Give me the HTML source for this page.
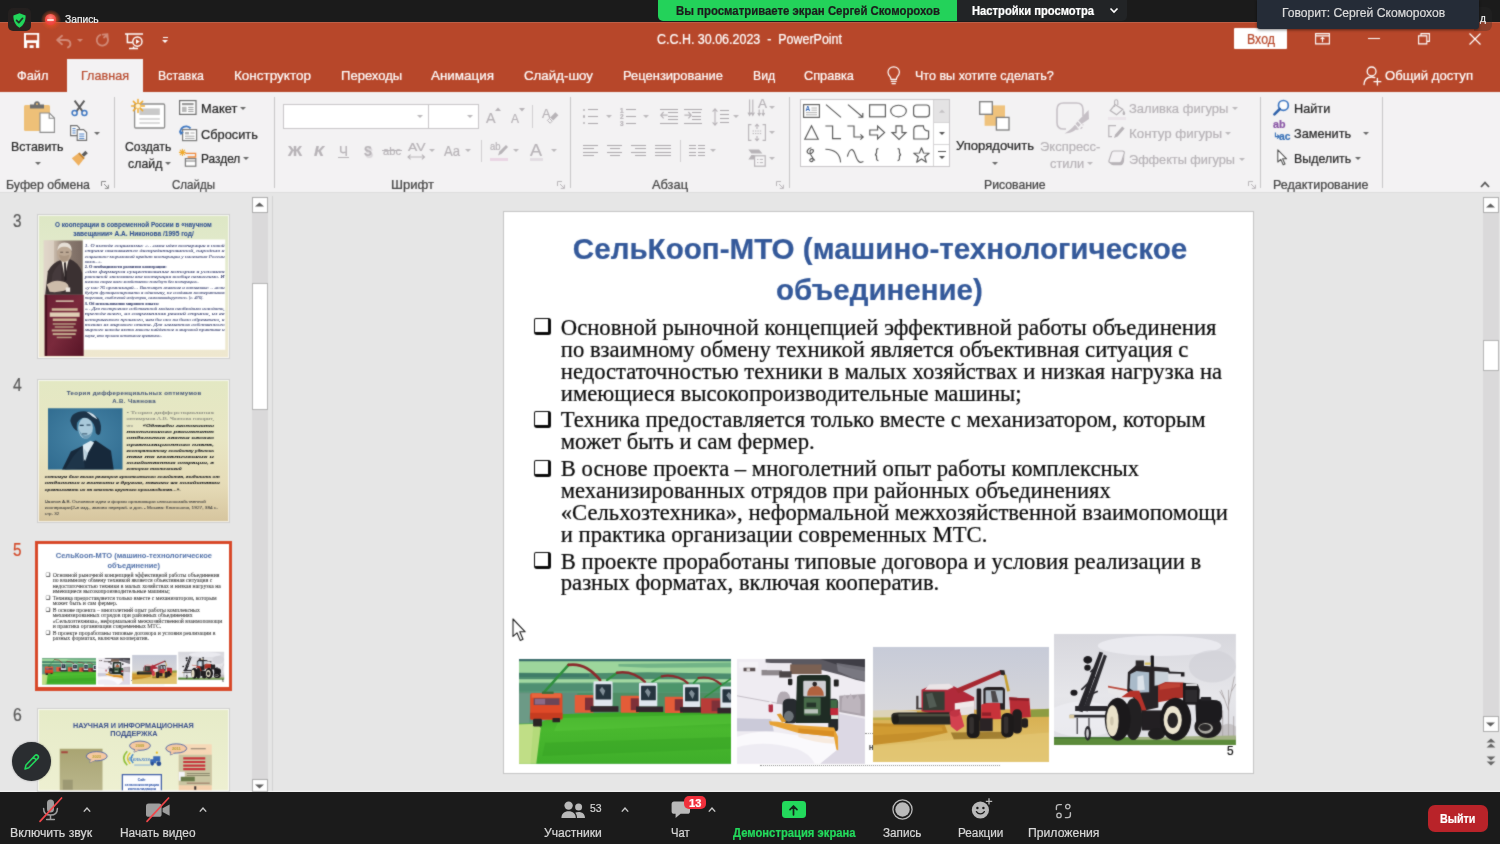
<!DOCTYPE html><html lang="ru"><head><meta charset="utf-8"><title>PowerPoint – Zoom</title><style>
*{box-sizing:border-box;margin:0;padding:0}
html,body{width:1500px;height:844px;overflow:hidden;background:#e6e6e6}
body{position:relative;font-family:"Liberation Sans",sans-serif}
.t{position:absolute;white-space:nowrap;transform-origin:0 50%;display:block;-webkit-text-stroke:.22px currentColor}
#screen{position:absolute;left:0;top:0;width:1500px;height:844px;background:#e6e6e6;filter:url(#soft);will-change:transform}
#zoom{position:absolute;left:0;top:0;width:1500px;height:844px;will-change:transform}
.b{position:absolute}
svg{position:absolute;overflow:visible}
.sep{position:absolute;width:1px;background:#c6c6c6;top:97px;height:91px}
.dd{position:absolute;width:0;height:0;border-left:3px solid transparent;border-right:3px solid transparent;border-top:3.5px solid #6a6a6a}
.dd.dis{border-top-color:#bcb9bc}
</style></head><body><svg width="0" height="0" style="position:absolute" aria-hidden="true"><filter id="soft" x="0" y="0" width="1" height="1" color-interpolation-filters="sRGB"><feConvolveMatrix order="3" kernelMatrix="0.4 1 0.4 1 6.4 1 0.4 1 0.4" divisor="12" edgeMode="duplicate" preserveAlpha="true"/></filter></svg><div id="screen"><div class="b" style="left:0.0px;top:22.0px;width:1500.0px;height:70.0px;background:#b7472a;"></div>
<div class="b" style="left:0.0px;top:92.0px;width:1500.0px;height:101.0px;background:#f3f2f3;"></div>
<div class="b" style="left:0.0px;top:192.0px;width:1500.0px;height:1.0px;background:#dcdcdc;"></div>
<div class="b" style="left:0.0px;top:790.5px;width:1500.0px;height:1.5px;background:#f4f4f4;"></div>
<span class="t" style="left:657.0px;top:39.1px;font:400 14px/0 'Liberation Sans',sans-serif;color:#ffffff;transform:scaleX(0.8904);white-space:pre;">С.С.Н. 30.06.2023  -  PowerPoint</span>
<div class="b" style="left:1234.0px;top:28.0px;width:53.0px;height:21.0px;background:#ffffff;border-radius:1px"></div>
<span class="t" style="left:1247.0px;top:38.7px;font:400 14px/0 'Liberation Sans',sans-serif;color:#b7472a;transform:scaleX(0.8841);">Вход</span>
<div class="b" style="left:66.7px;top:59.3px;width:76.0px;height:32.7px;background:#f3f2f3;"></div>
<span class="t" style="left:16.5px;top:75.6px;font:400 13.5px/0 'Liberation Sans',sans-serif;color:#ffffff;transform:scaleX(0.9487);">Файл</span>
<span class="t" style="left:80.5px;top:75.6px;font:400 13.5px/0 'Liberation Sans',sans-serif;color:#b7472a;transform:scaleX(0.9340);">Главная</span>
<span class="t" style="left:158.0px;top:75.6px;font:400 13.5px/0 'Liberation Sans',sans-serif;color:#ffffff;transform:scaleX(0.9166);">Вставка</span>
<span class="t" style="left:234.0px;top:75.6px;font:400 13.5px/0 'Liberation Sans',sans-serif;color:#ffffff;">Конструктор</span>
<span class="t" style="left:340.8px;top:75.6px;font:400 13.5px/0 'Liberation Sans',sans-serif;color:#ffffff;transform:scaleX(0.9664);">Переходы</span>
<span class="t" style="left:431.0px;top:75.6px;font:400 13.5px/0 'Liberation Sans',sans-serif;color:#ffffff;transform:scaleX(0.9941);">Анимация</span>
<span class="t" style="left:524.0px;top:75.6px;font:400 13.5px/0 'Liberation Sans',sans-serif;color:#ffffff;transform:scaleX(0.9857);">Слайд-шоу</span>
<span class="t" style="left:622.6px;top:75.6px;font:400 13.5px/0 'Liberation Sans',sans-serif;color:#ffffff;transform:scaleX(0.9592);">Рецензирование</span>
<span class="t" style="left:752.5px;top:75.6px;font:400 13.5px/0 'Liberation Sans',sans-serif;color:#ffffff;transform:scaleX(0.9084);">Вид</span>
<span class="t" style="left:804.0px;top:75.6px;font:400 13.5px/0 'Liberation Sans',sans-serif;color:#ffffff;transform:scaleX(0.9421);">Справка</span>
<span class="t" style="left:915.2px;top:75.6px;font:400 13.5px/0 'Liberation Sans',sans-serif;color:#ffffff;transform:scaleX(0.9300);">Что вы хотите сделать?</span>
<span class="t" style="left:1385.0px;top:75.6px;font:400 13.5px/0 'Liberation Sans',sans-serif;color:#ffffff;transform:scaleX(0.9702);">Общий доступ</span>
<div class="sep" style="left:113.5px"></div>
<div class="sep" style="left:274.0px"></div>
<div class="sep" style="left:569.5px"></div>
<div class="sep" style="left:788.8px"></div>
<div class="sep" style="left:1260.0px"></div>
<div class="sep" style="left:1382.0px"></div>
<span class="t" style="left:5.6px;top:185.2px;font:400 12.2px/0 'Liberation Sans',sans-serif;color:#444444;transform:scaleX(1.0143);">Буфер обмена</span>
<span class="t" style="left:171.7px;top:185.2px;font:400 12.2px/0 'Liberation Sans',sans-serif;color:#444444;transform:scaleX(0.9477);">Слайды</span>
<span class="t" style="left:391.0px;top:185.2px;font:400 12.2px/0 'Liberation Sans',sans-serif;color:#444444;transform:scaleX(1.0721);">Шрифт</span>
<span class="t" style="left:652.0px;top:185.2px;font:400 12.2px/0 'Liberation Sans',sans-serif;color:#444444;transform:scaleX(1.0525);">Абзац</span>
<span class="t" style="left:984.3px;top:185.2px;font:400 12.2px/0 'Liberation Sans',sans-serif;color:#444444;transform:scaleX(1.0050);">Рисование</span>
<span class="t" style="left:1273.0px;top:185.2px;font:400 12.2px/0 'Liberation Sans',sans-serif;color:#444444;transform:scaleX(1.0286);">Редактирование</span>
<span class="t" style="left:11.0px;top:146.9px;font:400 13.3px/0 'Liberation Sans',sans-serif;color:#262626;transform:scaleX(0.9313);">Вставить</span>
<i class="dd" style="left:35.0px;top:161.5px;"></i>
<i class="dd" style="left:94.0px;top:131.5px;"></i>
<span class="t" style="left:125.4px;top:146.9px;font:400 13.3px/0 'Liberation Sans',sans-serif;color:#262626;transform:scaleX(0.9160);">Создать</span>
<span class="t" style="left:128.0px;top:163.5px;font:400 13.3px/0 'Liberation Sans',sans-serif;color:#262626;transform:scaleX(0.9297);">слайд</span>
<i class="dd" style="left:165.0px;top:161.5px;"></i>
<span class="t" style="left:200.7px;top:109.0px;font:400 13.3px/0 'Liberation Sans',sans-serif;color:#262626;transform:scaleX(0.9644);">Макет</span>
<i class="dd" style="left:240.0px;top:107.0px;"></i>
<span class="t" style="left:200.7px;top:134.7px;font:400 13.3px/0 'Liberation Sans',sans-serif;color:#262626;transform:scaleX(0.9626);">Сбросить</span>
<span class="t" style="left:200.7px;top:159.0px;font:400 13.3px/0 'Liberation Sans',sans-serif;color:#262626;transform:scaleX(0.8941);">Раздел</span>
<i class="dd" style="left:243.0px;top:157.0px;"></i>
<div class="b" style="left:283.0px;top:104.0px;width:145.5px;height:25.0px;background:#ffffff;border:1px solid #c8c6c8"></div>
<div class="b" style="left:428.0px;top:104.0px;width:51.0px;height:25.0px;background:#ffffff;border:1px solid #c8c6c8"></div>
<i class="dd dis" style="left:417.0px;top:115.0px;"></i>
<i class="dd dis" style="left:467.0px;top:115.0px;"></i>
<span class="t" style="left:288.0px;top:150.8px;font:700 14.5px/0 'Liberation Sans',sans-serif;color:#b7b3b7;transform:scaleX(1.0679);">Ж</span>
<span class="t" style="left:314.0px;top:150.8px;font:700 14.5px/0 'Liberation Sans',sans-serif;font-style:italic;color:#b7b3b7;transform:scaleX(1.1208);">К</span>
<span class="t" style="left:338.5px;top:150.8px;font:400 14.5px/0 'Liberation Sans',sans-serif;color:#b7b3b7;transform:scaleX(0.9305);border-bottom:0;">Ч</span>
<div class="b" style="left:337.5px;top:157.2px;width:11.0px;height:1.2px;background:#b7b3b7;"></div>
<span class="t" style="left:364.0px;top:150.8px;font:700 14.5px/0 'Liberation Sans',sans-serif;color:#b7b3b7;transform:scaleX(0.8271);text-shadow:1.5px 1.5px 1px #d6d3d6;">S</span>
<span class="t" style="left:383.0px;top:151.3px;font:400 11.5px/0 'Liberation Sans',sans-serif;color:#b7b3b7;transform:scaleX(0.9705);">abc</span>
<div class="b" style="left:382.0px;top:150.2px;width:20.0px;height:1.0px;background:#b7b3b7;"></div>
<span class="t" style="left:407.5px;top:146.8px;font:400 11.5px/0 'Liberation Sans',sans-serif;color:#b7b3b7;transform:scaleX(1.2069);">AV</span>
<i class="dd dis" style="left:429.0px;top:148.5px;"></i>
<span class="t" style="left:444.0px;top:150.8px;font:400 14.5px/0 'Liberation Sans',sans-serif;color:#b7b3b7;transform:scaleX(0.9014);">Aa</span>
<i class="dd dis" style="left:465.0px;top:148.5px;"></i>
<div class="b" style="left:481.0px;top:140.0px;width:1.0px;height:22.0px;background:#d0ced0;"></div>
<i class="dd dis" style="left:513.0px;top:148.5px;"></i>
<span class="t" style="left:530.0px;top:150.9px;font:400 17px/0 'Liberation Sans',sans-serif;color:#b7b3b7;transform:scaleX(1.0579);">A</span>
<i class="dd dis" style="left:551.0px;top:148.5px;"></i>
<span class="t" style="left:485.5px;top:118.3px;font:400 14.5px/0 'Liberation Sans',sans-serif;color:#b7b3b7;transform:scaleX(0.9822);">A</span>
<span class="t" style="left:510.5px;top:119.0px;font:400 12.5px/0 'Liberation Sans',sans-serif;color:#b7b3b7;transform:scaleX(0.9588);">A</span>
<div class="b" style="left:532.0px;top:105.0px;width:1.0px;height:23.0px;background:#d0ced0;"></div>
<i class="dd dis" style="left:606.0px;top:115.0px;"></i>
<i class="dd dis" style="left:643.0px;top:115.0px;"></i>
<i class="dd dis" style="left:733.0px;top:115.0px;"></i>
<i class="dd dis" style="left:769.0px;top:106.0px;"></i>
<i class="dd dis" style="left:769.0px;top:131.0px;"></i>
<i class="dd dis" style="left:769.0px;top:156.5px;"></i>
<i class="dd dis" style="left:710.0px;top:149.0px;"></i>
<div class="b" style="left:680.0px;top:140.0px;width:1.0px;height:22.0px;background:#d0ced0;"></div>
<div class="b" style="left:799.5px;top:99.0px;width:150.5px;height:67.5px;background:#ffffff;border:1px solid #c8c6c8"></div>
<div class="b" style="left:933.5px;top:100.0px;width:15.5px;height:22.0px;background:#e4e3e4;"></div>
<div class="b" style="left:933.0px;top:100.0px;width:1.0px;height:65.5px;background:#d6d4d6;"></div>
<div class="b" style="left:934.0px;top:122.0px;width:15.0px;height:1.0px;background:#d6d4d6;"></div>
<div class="b" style="left:934.0px;top:144.0px;width:15.0px;height:1.0px;background:#d6d4d6;"></div>
<svg style="left:938.5px;top:109px" width="6" height="4" viewBox="0 0 6 4"><path d="M0 3.8 L3 0.4 L6 3.8Z" fill="#c4c2c4"/></svg>
<i class="dd" style="left:938.5px;top:132.0px;border-top-color:#555;"></i>
<i class="dd" style="left:938.5px;top:156.0px;border-top-color:#555;"></i>
<div class="b" style="left:937.5px;top:151.0px;width:8.0px;height:1.3px;background:#555;"></div>
<span class="t" style="left:955.7px;top:146.0px;font:400 13.3px/0 'Liberation Sans',sans-serif;color:#262626;transform:scaleX(0.9856);">Упорядочить</span>
<i class="dd" style="left:992.0px;top:161.5px;"></i>
<span class="t" style="left:1040.0px;top:146.7px;font:400 13.3px/0 'Liberation Sans',sans-serif;color:#b7b3b7;transform:scaleX(0.9759);">Экспресс-</span>
<span class="t" style="left:1049.5px;top:163.6px;font:400 13.3px/0 'Liberation Sans',sans-serif;color:#b7b3b7;transform:scaleX(0.9644);">стили</span>
<i class="dd dis" style="left:1087.0px;top:161.5px;"></i>
<span class="t" style="left:1129.0px;top:108.6px;font:400 13.3px/0 'Liberation Sans',sans-serif;color:#b7b3b7;transform:scaleX(0.9789);">Заливка фигуры</span>
<i class="dd dis" style="left:1232.0px;top:106.5px;"></i>
<span class="t" style="left:1129.0px;top:133.9px;font:400 13.3px/0 'Liberation Sans',sans-serif;color:#b7b3b7;">Контур фигуры</span>
<i class="dd dis" style="left:1225.0px;top:132.0px;"></i>
<span class="t" style="left:1129.0px;top:159.6px;font:400 13.3px/0 'Liberation Sans',sans-serif;color:#b7b3b7;transform:scaleX(0.9566);">Эффекты фигуры</span>
<i class="dd dis" style="left:1239.0px;top:157.5px;"></i>
<span class="t" style="left:1294.2px;top:108.7px;font:400 13.3px/0 'Liberation Sans',sans-serif;color:#262626;transform:scaleX(0.9564);">Найти</span>
<span class="t" style="left:1294.2px;top:134.4px;font:400 13.3px/0 'Liberation Sans',sans-serif;color:#262626;transform:scaleX(0.9571);">Заменить</span>
<i class="dd" style="left:1362.7px;top:132.0px;"></i>
<span class="t" style="left:1294.2px;top:158.9px;font:400 13.3px/0 'Liberation Sans',sans-serif;color:#262626;transform:scaleX(0.9325);">Выделить</span>
<i class="dd" style="left:1355.0px;top:157.0px;"></i>
<svg style="left:24.3px;top:33.2px" width="15.2" height="15" viewBox="0 0 15.2 15"><path d="M0 0 H15.2 V15 H0 Z M2 1.8 V7.2 H13.2 V1.8 Z M3.2 10 V15 H5.6 V12.2 H9.6 V15 H12 V10 Z" fill="#fff" fill-rule="evenodd"/></svg>
<svg style="left:55.5px;top:34.5px" width="16" height="13" viewBox="0 0 16 13"><path d="M6 0.8 L1.2 5 L6 9.2 M1.6 5 H9.5 C12.6 5 14.4 6.8 14.4 9 C14.4 10.8 13.4 11.8 12 12.4" fill="none" stroke="rgba(255,255,255,.36)" stroke-width="1.9" stroke-linejoin="round" stroke-linecap="round"/></svg>
<i class="dd" style="left:76.5px;top:38.8px;border-top-color:rgba(255,255,255,.36);"></i>
<svg style="left:95.0px;top:33.4px" width="14" height="14" viewBox="0 0 14 14"><path d="M7.6 1.6 L12.4 1.2 L12.8 6 M12.2 1.8 C12.2 1.8 9 4.5 9 4.5 M11.6 3.4 C13 5 13.4 7.6 12.2 9.8 C10.6 12.6 7 13.4 4.4 11.8 C1.8 10.2 1 6.8 2.6 4.2 C3.2 3.2 4.2 2.4 5.2 2" fill="none" stroke="rgba(255,255,255,.36)" stroke-width="1.8" stroke-linecap="round"/></svg>
<svg style="left:125.0px;top:33.0px" width="18.5" height="17" viewBox="0 0 18.5 17"><path d="M0 1 H18 M2.4 1 V9.6 H7.6 M4 15.6 H13 M8.6 15.6 L8.6 13.4" fill="none" stroke="#fff" stroke-width="1.5"/><circle cx="12.4" cy="8.6" r="4.6" fill="none" stroke="#fff" stroke-width="1.4"/><path d="M11 6.2 L14.8 8.6 L11 11 Z" fill="#fff"/></svg>
<div class="b" style="left:162.6px;top:37.0px;width:5.4px;height:1.3px;background:#fff;"></div>
<i class="dd" style="left:162.3px;top:40.3px;border-top-color:#fff"></i>
<svg style="left:1314.5px;top:32.5px" width="15" height="11.5" viewBox="0 0 15 11.5"><path d="M0.6 0.6 H14.4 V10.9 H0.6 Z M0.6 2.9 H14.4" fill="none" stroke="#fff" stroke-width="1.1"/><path d="M7.5 9.2 V4.6 M5.6 6.2 L7.5 4.4 L9.4 6.2" fill="none" stroke="#fff" stroke-width="1.1"/></svg>
<div class="b" style="left:1367.5px;top:38.2px;width:12.0px;height:1.2px;background:#fff;"></div>
<svg style="left:1418.0px;top:32.5px" width="12" height="11.5" viewBox="0 0 12 11.5"><path d="M0.6 2.9 H8.8 V10.9 H0.6 Z M3 2.9 V0.6 H11.4 V8.4 H8.8" fill="none" stroke="#fff" stroke-width="1.1"/></svg>
<svg style="left:1468.5px;top:32.5px" width="12" height="12" viewBox="0 0 12 12"><path d="M0.5 0.5 L11.5 11.5 M11.5 0.5 L0.5 11.5" stroke="#fff" stroke-width="1.2" fill="none"/></svg>
<svg style="left:886.5px;top:66.0px" width="13.5" height="19" viewBox="0 0 13.5 19"><path d="M6.7 0.8 C3.4 0.8 1 3.2 1 6.2 C1 8.2 2 9.4 3 10.6 C3.7 11.5 4 12.2 4 13.4 H9.4 C9.4 12.2 9.7 11.5 10.4 10.6 C11.4 9.4 12.4 8.2 12.4 6.2 C12.4 3.2 10 0.8 6.7 0.8 Z M4.3 15.4 H9.1 M5 17.6 H8.4" fill="none" stroke="#fff" stroke-width="1.2" stroke-linecap="round"/></svg>
<svg style="left:1363.0px;top:65.5px" width="19" height="20" viewBox="0 0 19 20"><circle cx="8.6" cy="5.4" r="4.4" fill="none" stroke="#fff" stroke-width="1.3"/><path d="M1 18.6 C1.4 13.6 4.6 11 8.6 11 C9.8 11 10.8 11.2 11.8 11.6 M14.4 12.4 V19 M11 15.7 H17.8" fill="none" stroke="#fff" stroke-width="1.3" stroke-linecap="round"/></svg>
<svg style="left:24.0px;top:101.0px" width="31" height="32" viewBox="0 0 31 32"><rect x="0" y="4" width="26" height="26" rx="1.5" fill="#eec078"/><path d="M6 7.5 V3.6 H10 C10 1.4 11.2 0.2 13 0.2 C14.8 0.2 16 1.4 16 3.6 H20 V7.5 Z" fill="#6e6e6e"/><circle cx="13" cy="3" r="1" fill="#eec078"/><path d="M16 12 H25.4 L30.4 17 V31.4 H16 Z" fill="#fff" stroke="#8a8a8a" stroke-width="1.1"/><path d="M25.2 12.2 V17.2 H30.2" fill="none" stroke="#8a8a8a" stroke-width="1.1"/></svg>
<svg style="left:70.5px;top:99.5px" width="17" height="16" viewBox="0 0 17 16"><path d="M3.6 0.6 L11.6 11.4 M13.4 0.6 L5.4 11.4" stroke="#5c5c5c" stroke-width="1.9" fill="none"/><circle cx="3.6" cy="13" r="2.5" fill="none" stroke="#3f78c2" stroke-width="1.5"/><circle cx="13.4" cy="13" r="2.5" fill="none" stroke="#3f78c2" stroke-width="1.5"/></svg>
<svg style="left:70.0px;top:124.5px" width="18" height="16" viewBox="0 0 18 16"><path d="M0.6 0.6 H7 L9.4 3 V10.6 H0.6 Z" fill="#fff" stroke="#6e6e6e" stroke-width="1.1"/><path d="M2.4 3.6 H5.6 M2.4 5.8 H5.6 M2.4 8 H5.6" stroke="#4a7fc4" stroke-width="1"/><path d="M7.2 4.6 H13.6 L16.6 7.6 V15.4 H7.2 Z" fill="#fff" stroke="#6e6e6e" stroke-width="1.1"/><path d="M9.2 9 H14.4 M9.2 11.2 H14.4 M9.2 13.4 H14.4" stroke="#4a7fc4" stroke-width="1"/></svg>
<svg style="left:70.5px;top:149.5px" width="18" height="17" viewBox="0 0 18 17"><path d="M0.8 8.2 L6.8 3.8 L12.4 9.6 L7.6 15.8 Z" fill="#eeb160"/><path d="M6.8 3.8 L8.6 2.4 L13.8 8 L12.4 9.6 Z" fill="#c9862e"/><path d="M10.6 4.4 L14.4 0.8 L16.8 3.2 L13 6.8 Z" fill="#5c5c5c"/></svg>
<svg style="left:131.0px;top:98.5px" width="35" height="30" viewBox="0 0 35 30"><rect x="3.6" y="5" width="30" height="24" rx="1.2" fill="#fff" stroke="#8c8c8c" stroke-width="1.3"/><rect x="8.4" y="9.4" width="20.4" height="6.6" fill="#c9c9c9"/><path d="M8.4 20 H28.8 M8.4 24 H28.8" stroke="#b5b5b5" stroke-width="1.2"/><g stroke="#efa92c" stroke-width="1.5" stroke-linecap="round"><path d="M7 0.6 V13.4 M0.6 7 H13.4 M2.4 2.4 L11.6 11.6 M11.6 2.4 L2.4 11.6"/></g><circle cx="7" cy="7" r="2.3" fill="#fff3d0"/></svg>
<svg style="left:179.0px;top:100.0px" width="17.6" height="15" viewBox="0 0 17.6 15"><rect x="0.6" y="0.6" width="16.4" height="13.8" fill="#fff" stroke="#6e6e6e" stroke-width="1.2"/><rect x="3" y="3" width="11.6" height="2.2" fill="#9a9a9a"/><rect x="3" y="6.8" width="4.6" height="5.2" fill="#b9b9b9"/><path d="M9.2 7.4 H14.6 M9.2 9.4 H14.6 M9.2 11.4 H14.6" stroke="#9a9a9a" stroke-width="1"/></svg>
<svg style="left:178.5px;top:124.5px" width="18.5" height="16.5" viewBox="0 0 18.5 16.5"><rect x="3.6" y="4.6" width="14" height="11" fill="#fff" stroke="#7a7a7a" stroke-width="1.2"/><rect x="6" y="7" width="4" height="2.4" fill="#b0b0b0"/><path d="M11.4 8 H15.6 M6 11.2 H15.6 M6 13.4 H15.6" stroke="#a6a6a6" stroke-width="1"/><path d="M1.6 8.6 C0.4 4.4 3.4 1.2 7.6 1.4 C9.4 1.5 10.6 2.2 11.6 3.4" fill="none" stroke="#3f78c2" stroke-width="1.7"/><path d="M0 6.2 L1.8 10.2 L4.8 7 Z" fill="#3f78c2"/></svg>
<svg style="left:179.0px;top:149.0px" width="18" height="18" viewBox="0 0 18 18"><g stroke="#efa92c" stroke-width="1.1" stroke-linecap="round"><path d="M3.4 0.4 V6.4 M0.4 3.4 H6.4 M1.2 1.2 L5.6 5.6 M5.6 1.2 L1.2 5.6"/></g><path d="M6.4 4.4 H16.6 V8 H8.6" fill="none" stroke="#ef8a3c" stroke-width="1.3"/><rect x="6.4" y="9.6" width="10.4" height="7.6" fill="#fff" stroke="#7a7a7a" stroke-width="1.2"/><path d="M6.4 12 H16.8" stroke="#7a7a7a" stroke-width="1"/></svg>
<svg style="left:494.5px;top:106.5px" width="6" height="4" viewBox="0 0 6 4"><path d="M0 4 L3 0.4 L6 4 Z" fill="#b7b3b7"/></svg>
<svg style="left:518.5px;top:107.5px" width="6" height="4" viewBox="0 0 6 4"><path d="M0 0 L3 3.6 L6 0 Z" fill="#b7b3b7"/></svg>
<span class="t" style="left:541.5px;top:114.2px;font:400 12.5px/0 'Liberation Sans',sans-serif;color:#b7b3b7;transform:scaleX(1.0187);">A</span>
<svg style="left:545.0px;top:111.0px" width="14" height="14" viewBox="0 0 14 14"><path d="M5.2 6.4 L10.4 1.2 L13.4 4.2 L8.2 9.4 Z" fill="#b7b3b7"/><path d="M4.4 7.4 L7.2 10.2 L5.2 12.2 L2.4 9.4 Z" fill="none" stroke="#b7b3b7" stroke-width="1"/></svg>
<svg style="left:407.0px;top:154.0px" width="18.5" height="6" viewBox="0 0 18.5 6"><path d="M1 3 H17.5 M3.6 0.6 L1 3 L3.6 5.4 M14.9 0.6 L17.5 3 L14.9 5.4" fill="none" stroke="#b7b3b7" stroke-width="1.1"/></svg>
<span class="t" style="left:490.0px;top:146.4px;font:400 10.5px/0 'Liberation Sans',sans-serif;color:#b7b3b7;transform:scaleX(0.8984);">ab</span>
<svg style="left:495.0px;top:143.5px" width="14" height="14" viewBox="0 0 14 14"><path d="M3 11.4 L4.4 7.6 L11 1 L13 3 L6.6 9.8 Z" fill="#b7b3b7"/></svg>
<div class="b" style="left:490.0px;top:158.0px;width:18.0px;height:2.6px;background:#ead6e4;"></div>
<div class="b" style="left:529.5px;top:158.0px;width:13.0px;height:2.6px;background:#e2dde2;"></div>
<div class="b" style="left:583.0px;top:108.8px;width:2.4px;height:2.4px;background:#b7b3b7;border-radius:50%"></div>
<div class="b" style="left:583.0px;top:115.4px;width:2.4px;height:2.4px;background:#b7b3b7;border-radius:50%"></div>
<div class="b" style="left:583.0px;top:122.0px;width:2.4px;height:2.4px;background:#b7b3b7;border-radius:50%"></div>
<div class="b" style="left:588.0px;top:109.0px;width:10.0px;height:1.0px;background:#aca8ac;"></div><div class="b" style="left:588.0px;top:116.0px;width:10.0px;height:1.0px;background:#aca8ac;"></div><div class="b" style="left:588.0px;top:123.0px;width:10.0px;height:1.0px;background:#aca8ac;"></div>
<span class="t" style="left:620.0px;top:110.7px;font:700 6.5px/0 'Liberation Sans',sans-serif;color:#b7b3b7;transform:scaleX(0.9931);">1</span>
<span class="t" style="left:620.0px;top:117.3px;font:700 6.5px/0 'Liberation Sans',sans-serif;color:#b7b3b7;transform:scaleX(0.9931);">2</span>
<span class="t" style="left:620.0px;top:123.9px;font:700 6.5px/0 'Liberation Sans',sans-serif;color:#b7b3b7;transform:scaleX(0.9931);">3</span>
<div class="b" style="left:626.0px;top:109.0px;width:10.0px;height:1.0px;background:#aca8ac;"></div><div class="b" style="left:626.0px;top:116.0px;width:10.0px;height:1.0px;background:#aca8ac;"></div><div class="b" style="left:626.0px;top:123.0px;width:10.0px;height:1.0px;background:#aca8ac;"></div>
<div class="b" style="left:660.0px;top:109.0px;width:18.0px;height:1.0px;background:#aca8ac;"></div><div class="b" style="left:660.0px;top:123.0px;width:18.0px;height:1.0px;background:#aca8ac;"></div>
<div class="b" style="left:668.0px;top:112.0px;width:10.0px;height:1.0px;background:#aca8ac;"></div><div class="b" style="left:668.0px;top:116.0px;width:10.0px;height:1.0px;background:#aca8ac;"></div><div class="b" style="left:668.0px;top:119.0px;width:10.0px;height:1.0px;background:#aca8ac;"></div>
<svg style="left:660.0px;top:111.4px" width="8" height="8.4" viewBox="0 0 8 8.4"><path d="M7.6 4.2 H1 M3.6 1 L0.8 4.2 L3.6 7.4" fill="none" stroke="#b7b3b7" stroke-width="1.2"/></svg>
<div class="b" style="left:684.0px;top:109.0px;width:18.0px;height:1.0px;background:#aca8ac;"></div><div class="b" style="left:684.0px;top:123.0px;width:18.0px;height:1.0px;background:#aca8ac;"></div>
<div class="b" style="left:692.0px;top:112.0px;width:9.0px;height:1.0px;background:#aca8ac;"></div><div class="b" style="left:692.0px;top:116.0px;width:9.0px;height:1.0px;background:#aca8ac;"></div><div class="b" style="left:692.0px;top:119.0px;width:9.0px;height:1.0px;background:#aca8ac;"></div>
<svg style="left:684.0px;top:111.4px" width="8" height="8.4" viewBox="0 0 8 8.4"><path d="M0.4 4.2 H7 M4.4 1 L7.2 4.2 L4.4 7.4" fill="none" stroke="#b7b3b7" stroke-width="1.2"/></svg>
<svg style="left:712.0px;top:107.5px" width="6" height="18" viewBox="0 0 6 18"><path d="M3 1 V17 M0.6 3.6 L3 0.8 L5.4 3.6 M0.6 14.4 L3 17.2 L5.4 14.4" fill="none" stroke="#b7b3b7" stroke-width="1.1"/></svg>
<div class="b" style="left:720.0px;top:110.0px;width:9.0px;height:1.0px;background:#aca8ac;"></div><div class="b" style="left:720.0px;top:114.0px;width:9.0px;height:1.0px;background:#aca8ac;"></div><div class="b" style="left:720.0px;top:118.0px;width:9.0px;height:1.0px;background:#aca8ac;"></div><div class="b" style="left:720.0px;top:122.0px;width:9.0px;height:1.0px;background:#aca8ac;"></div>
<svg style="left:748.0px;top:98.5px" width="18" height="18" viewBox="0 0 18 18"><path d="M1.6 0.6 V16 M4.8 0.6 V16 M0 13.6 L1.6 16.4 L3.2 13.6 M3.2 13.6 L4.8 16.4 L6.4 13.6 M11.2 10.4 V16 M15.2 10.4 V16 M9.8 14 L11.2 16.4 L12.6 14 M13.8 14 L15.2 16.4 L16.6 14" fill="none" stroke="#b7b3b7" stroke-width="1.1"/></svg>
<span class="t" style="left:757.5px;top:104.3px;font:400 12px/0 'Liberation Sans',sans-serif;color:#b7b3b7;transform:scaleX(1.1228);">A</span>
<svg style="left:748.0px;top:124.0px" width="18" height="17" viewBox="0 0 18 17"><path d="M3.4 0.6 H0.6 V16.4 H3.4 M14.6 0.6 H17.4 V16.4 H14.6" fill="none" stroke="#b7b3b7" stroke-width="1.1"/><path d="M4.6 7 H13.4 M4.6 9.6 H13.4" stroke="#b7b3b7" stroke-width="1" stroke-dasharray="1.4 1"/><path d="M9 0.4 V5 M7 2.4 L9 0.4 L11 2.4 M9 16.6 V12 M7 14.6 L9 16.6 L11 14.6" fill="none" stroke="#b7b3b7" stroke-width="1.1"/></svg>
<svg style="left:748.0px;top:149.0px" width="18" height="18" viewBox="0 0 18 18"><path d="M0.4 0.6 H11 L14.4 4.4 H3.4 Z" fill="#b7b3b7"/><path d="M0.4 10.4 L3.4 6 H6.6 V10.4 Z" fill="#b7b3b7"/><rect x="6.6" y="6.8" width="10.6" height="10.4" fill="#f7f6f7" stroke="#b7b3b7" stroke-width="1.2"/><path d="M9 10.4 H10.4 M11.8 10.4 H15 M9 13.6 H10.4 M11.8 13.6 H15" stroke="#b7b3b7" stroke-width="1"/></svg>
<div class="b" style="left:583.0px;top:145.0px;width:15.0px;height:1.0px;background:#aca8ac;"></div><div class="b" style="left:583.0px;top:148.0px;width:11.0px;height:1.0px;background:#aca8ac;"></div><div class="b" style="left:583.0px;top:152.0px;width:15.0px;height:1.0px;background:#aca8ac;"></div><div class="b" style="left:583.0px;top:155.0px;width:11.0px;height:1.0px;background:#aca8ac;"></div>
<div class="b" style="left:607.0px;top:145.0px;width:15.0px;height:1.0px;background:#aca8ac;"></div><div class="b" style="left:610.0px;top:148.0px;width:10.0px;height:1.0px;background:#aca8ac;"></div><div class="b" style="left:607.0px;top:152.0px;width:15.0px;height:1.0px;background:#aca8ac;"></div><div class="b" style="left:610.0px;top:155.0px;width:10.0px;height:1.0px;background:#aca8ac;"></div>
<div class="b" style="left:631.0px;top:145.0px;width:15.0px;height:1.0px;background:#aca8ac;"></div><div class="b" style="left:635.0px;top:148.0px;width:11.0px;height:1.0px;background:#aca8ac;"></div><div class="b" style="left:631.0px;top:152.0px;width:15.0px;height:1.0px;background:#aca8ac;"></div><div class="b" style="left:635.0px;top:155.0px;width:11.0px;height:1.0px;background:#aca8ac;"></div>
<div class="b" style="left:655.0px;top:145.0px;width:16.0px;height:1.0px;background:#aca8ac;"></div><div class="b" style="left:655.0px;top:148.0px;width:16.0px;height:1.0px;background:#aca8ac;"></div><div class="b" style="left:655.0px;top:152.0px;width:16.0px;height:1.0px;background:#aca8ac;"></div><div class="b" style="left:655.0px;top:155.0px;width:16.0px;height:1.0px;background:#aca8ac;"></div>
<div class="b" style="left:689.0px;top:145.0px;width:7.0px;height:1.0px;background:#aca8ac;"></div><div class="b" style="left:689.0px;top:148.0px;width:7.0px;height:1.0px;background:#aca8ac;"></div><div class="b" style="left:689.0px;top:152.0px;width:7.0px;height:1.0px;background:#aca8ac;"></div><div class="b" style="left:689.0px;top:155.0px;width:7.0px;height:1.0px;background:#aca8ac;"></div>
<div class="b" style="left:698.0px;top:145.0px;width:7.0px;height:1.0px;background:#aca8ac;"></div><div class="b" style="left:698.0px;top:148.0px;width:7.0px;height:1.0px;background:#aca8ac;"></div><div class="b" style="left:698.0px;top:152.0px;width:7.0px;height:1.0px;background:#aca8ac;"></div><div class="b" style="left:698.0px;top:155.0px;width:7.0px;height:1.0px;background:#aca8ac;"></div>
<svg style="left:101.0px;top:180.5px" width="8" height="8" viewBox="0 0 8 8"><path d="M0.5 5 V0.5 H5 M3 3 L7.2 7.2 M7.4 3.8 V7.4 H3.8" fill="none" stroke="#8a8a8a" stroke-width="1"/></svg>
<svg style="left:556.5px;top:180.5px" width="8" height="8" viewBox="0 0 8 8"><path d="M0.5 5 V0.5 H5 M3 3 L7.2 7.2 M7.4 3.8 V7.4 H3.8" fill="none" stroke="#b9b6b9" stroke-width="1"/></svg>
<svg style="left:775.5px;top:180.5px" width="8" height="8" viewBox="0 0 8 8"><path d="M0.5 5 V0.5 H5 M3 3 L7.2 7.2 M7.4 3.8 V7.4 H3.8" fill="none" stroke="#b9b6b9" stroke-width="1"/></svg>
<svg style="left:1247.5px;top:180.5px" width="8" height="8" viewBox="0 0 8 8"><path d="M0.5 5 V0.5 H5 M3 3 L7.2 7.2 M7.4 3.8 V7.4 H3.8" fill="none" stroke="#b9b6b9" stroke-width="1"/></svg>
<svg style="left:802.5px;top:103.8px" width="17" height="14" viewBox="0 0 17 14"><rect x="0.6" y="0.6" width="15.8" height="12.8" fill="#fff" stroke="#595959" stroke-width="1.1"/><path d="M8.4 4 H14 M8.4 6.2 H14 M3 8.6 H14 M3 10.8 H14" stroke="#a8a8a8" stroke-width="0.9"/><text x="2.4" y="7" font-family="Liberation Sans,sans-serif" font-weight="700" font-size="6.4" fill="#2f64b5">A</text></svg>
<svg style="left:824.5px;top:103.8px" width="17" height="14" viewBox="0 0 17 14"><path d="M1 0.6 L16 13.4" fill="none" stroke="#595959" stroke-width="1.15"/></svg>
<svg style="left:846.8px;top:103.8px" width="17" height="14" viewBox="0 0 17 14"><path d="M1 0.6 L15.6 13 M15.8 9 V13.2 H11.4" fill="none" stroke="#595959" stroke-width="1.15"/></svg>
<svg style="left:868.5px;top:103.8px" width="17" height="14" viewBox="0 0 17 14"><rect x="0.6" y="0.8" width="15.8" height="12" fill="none" stroke="#595959" stroke-width="1.15"/></svg>
<svg style="left:890.3px;top:103.8px" width="17" height="14" viewBox="0 0 17 14"><ellipse cx="8.5" cy="7" rx="7.8" ry="5.8" fill="none" stroke="#595959" stroke-width="1.15"/></svg>
<svg style="left:912.5px;top:103.8px" width="17" height="14" viewBox="0 0 17 14"><rect x="0.6" y="1" width="15.8" height="11.8" rx="3" fill="none" stroke="#595959" stroke-width="1.15"/></svg>
<svg style="left:803.5px;top:125.1px" width="15" height="15" viewBox="0 0 15 15"><path d="M7.5 0.8 L14.2 14.2 H0.8 Z" fill="none" stroke="#595959" stroke-width="1.15"/></svg>
<svg style="left:824.5px;top:125.1px" width="17" height="15" viewBox="0 0 17 15"><path d="M0.4 1 H7.6 V13.6 H16" fill="none" stroke="#595959" stroke-width="1.15"/></svg>
<svg style="left:846.8px;top:125.1px" width="17" height="15" viewBox="0 0 17 15"><path d="M0.4 1 H7 V12 H16 M13.4 9.4 L16.2 12 L13.4 14.6" fill="none" stroke="#595959" stroke-width="1.15"/></svg>
<svg style="left:868.5px;top:125.1px" width="17" height="15" viewBox="0 0 17 15"><path d="M0.8 5 H8.6 V1 L15.6 7.5 L8.6 14 V10 H0.8 Z" fill="none" stroke="#595959" stroke-width="1.15"/></svg>
<svg style="left:890.8px;top:125.1px" width="16" height="15" viewBox="0 0 16 15"><path d="M5 0.8 H11 V7.6 H15 L8 14.4 L1 7.6 H5 Z" fill="none" stroke="#595959" stroke-width="1.15"/></svg>
<svg style="left:912.5px;top:125.1px" width="17" height="15" viewBox="0 0 17 15"><path d="M0.8 4.6 C0.8 2 2.6 0.8 5 0.8 H10.4 C10.4 4.2 12.4 6 15.6 6 V12 C15.6 13.2 14.8 14 13.6 14 H0.8 Z" fill="none" stroke="#595959" stroke-width="1.15"/></svg>
<svg style="left:805.0px;top:147.0px" width="12" height="16" viewBox="0 0 12 16"><path d="M6.4 0.8 C2.6 1.6 0.8 5 3.4 6.4 C6.4 7.8 10.4 3.4 7.4 2.6 C4.4 2 4.2 6.6 6.8 9.4 C8.8 11.6 8.6 14.8 6.2 14.6 C3.8 14.4 4.6 11.2 7.4 11.6 C8.6 11.8 9.4 12.6 9.8 13.4" fill="none" stroke="#595959" stroke-width="1.15"/></svg>
<svg style="left:824.5px;top:147.5px" width="17" height="15" viewBox="0 0 17 15"><path d="M0.4 1.2 C9 1.4 15 5.4 15.6 14.4" fill="none" stroke="#595959" stroke-width="1.15"/></svg>
<svg style="left:846.8px;top:147.5px" width="17" height="15" viewBox="0 0 17 15"><path d="M0.4 8.6 C2.6 0.2 5.8 -0.6 8.2 6.6 C10.4 13.6 12.6 15.6 16.4 13.6" fill="none" stroke="#595959" stroke-width="1.15"/></svg>
<svg style="left:873.0px;top:148.4px" width="8" height="13.2" viewBox="0 0 8 13.2"><path d="M5.4 0.6 C3.4 0.6 3.6 2 3.6 3.6 C3.6 5.4 3.4 6.4 2 6.6 C3.4 6.8 3.6 7.8 3.6 9.6 C3.6 11.2 3.4 12.6 5.4 12.6" fill="none" stroke="#595959" stroke-width="1.15"/></svg>
<svg style="left:894.8px;top:148.4px" width="8" height="13.2" viewBox="0 0 8 13.2"><path d="M2.6 0.6 C4.6 0.6 4.4 2 4.4 3.6 C4.4 5.4 4.6 6.4 6 6.6 C4.6 6.8 4.4 7.8 4.4 9.6 C4.4 11.2 4.6 12.6 2.6 12.6" fill="none" stroke="#595959" stroke-width="1.15"/></svg>
<svg style="left:912.5px;top:147.0px" width="17" height="16" viewBox="0 0 17 16"><path d="M8.5 0.8 L10.5 6 L16.2 6.2 L11.7 9.7 L13.3 15.2 L8.5 12 L3.7 15.2 L5.3 9.7 L0.8 6.2 L6.5 6 Z" fill="none" stroke="#595959" stroke-width="1.15" stroke-linejoin="round"/></svg>
<svg style="left:979.0px;top:101.0px" width="31" height="30" viewBox="0 0 31 30"><rect x="5.6" y="4.4" width="20.4" height="20.4" fill="#efc27c"/><rect x="0.7" y="0.7" width="12.6" height="12.6" fill="#fff" stroke="#7d7d7d" stroke-width="1.3"/><rect x="17.4" y="16.4" width="12.6" height="12.6" fill="#fff" stroke="#7d7d7d" stroke-width="1.3"/></svg>
<svg style="left:1055.5px;top:102.0px" width="33.5" height="32.5" viewBox="0 0 33.5 32.5"><path d="M27 14 V7.6 C27 3.4 24.6 1 20.4 1 H7.6 C3.4 1 1 3.4 1 7.6 V20.4 C1 24.6 3.4 27 7.6 27 H10" fill="none" stroke="#c6c0c6" stroke-width="1.6"/><path d="M20 27 H22 C25 27 27 25.4 27 22.6" fill="none" stroke="#c6c0c6" stroke-width="1.4" stroke-dasharray="2.4 2"/><path d="M32.6 8 L33 17 L25.6 22 L22.4 18.6 Z" fill="#c6c0c6"/><path d="M21.6 19.6 L24.6 22.8 L22.6 25 L19.6 21.8 Z" fill="#c6c0c6"/><path d="M19 22.8 L21.6 25.6 C19 29.4 14.6 31.2 8.6 31.6 C13 29 16 26.6 19 22.8 Z" fill="#c6c0c6"/></svg>
<svg style="left:1108.0px;top:98.5px" width="18" height="18" viewBox="0 0 18 18"><path d="M7 5.6 L14.8 10.4 L8.6 15.8 L2.2 11.6 Z" fill="none" stroke="#b7b3b7" stroke-width="1.2"/><path d="M6.6 8 V2.6 C6.6 0.2 9.8 0.2 9.8 2.6 V6" fill="none" stroke="#b7b3b7" stroke-width="1.1"/><path d="M15.6 11 C16.8 13 17.2 14 17.2 14.8 C17.2 16.4 14.6 16.4 14.6 14.8 C14.6 14 15 13 15.6 11 Z" fill="#b7b3b7"/></svg>
<div class="b" style="left:1107.5px;top:117.4px;width:18.5px;height:2.2px;background:#ebe5ea;"></div>
<svg style="left:1108.0px;top:124.0px" width="18" height="16" viewBox="0 0 18 16"><path d="M8 1.6 H0.8 V12.6 H4" fill="none" stroke="#b7b3b7" stroke-width="1.2"/><path d="M6 14 L7.2 10.4 L14.2 2.4 L16.6 4.6 L9.6 12.6 Z" fill="#b7b3b7"/></svg>
<svg style="left:1108.0px;top:150.0px" width="18" height="16" viewBox="0 0 18 16"><path d="M1 10.6 L3.6 2.6 C4 1.4 4.8 1 6 1 H14.4 C16 1 16.6 2 16.2 3.4 L13.8 11 C13.4 12.2 12.6 12.8 11.4 12.8 H3 C1.4 12.8 0.6 12 1 10.6 Z" fill="#f4f2f4" stroke="#b7b3b7" stroke-width="1.2"/><path d="M1.6 12 C2.4 14.6 3.6 15.2 5.6 15.2 H12.6 C14.4 15.2 15.4 14 16 11.6 L16.4 5 L13.8 11 C13.4 12.2 12.6 12.8 11.4 12.8 H3 Z" fill="#b7b3b7"/></svg>
<svg style="left:1273.0px;top:99.0px" width="17" height="17" viewBox="0 0 17 17"><circle cx="10.4" cy="6.4" r="4.9" fill="#fdfdfd" stroke="#3f78c2" stroke-width="1.7"/><path d="M6.8 10 L1.4 15.4" stroke="#2f62aa" stroke-width="2.6" stroke-linecap="round"/></svg>
<span class="t" style="left:1272.5px;top:123.9px;font:700 10.5px/0 'Liberation Sans',sans-serif;color:#8a56a6;transform:scaleX(1.0191);">ab</span>
<span class="t" style="left:1278.5px;top:136.2px;font:700 10.5px/0 'Liberation Sans',sans-serif;color:#3a72b8;transform:scaleX(0.9840);">ac</span>
<svg style="left:1272.5px;top:132.0px" width="7" height="8" viewBox="0 0 7 8"><path d="M2.4 0.4 V4.6 H6 M4.2 2.6 L6.2 4.6 L4.2 6.6" fill="none" stroke="#3a72b8" stroke-width="1.1"/></svg>
<svg style="left:1277.0px;top:149.0px" width="11" height="17" viewBox="0 0 11 17"><path d="M0.8 0.8 V13 L3.8 10.4 L6.2 15.8 L8 15 L5.6 9.8 H9.6 Z" fill="#fff" stroke="#555" stroke-width="1.1" stroke-linejoin="round"/></svg>
<svg style="left:1479.5px;top:180.5px" width="10" height="7" viewBox="0 0 10 7"><path d="M1 6 L5 1.6 L9 6" fill="none" stroke="#5a5a5a" stroke-width="1.8"/></svg>
<div class="b" style="left:504px;top:212px;width:749.4px;height:561.2px;background:#fff;outline:1px solid #c4c4c4;overflow:hidden"><span class="t" style="left:68.8px;top:37.1px;font:700 29.6px/0 'Liberation Sans',sans-serif;color:#34599a;">СельКооп-МТО (машино-технологическое</span><span class="t" style="left:272.2px;top:77.7px;font:700 29.6px/0 'Liberation Sans',sans-serif;color:#34599a;transform:scaleX(0.9957);">объединение)</span><span class="t" style="left:56.8px;top:115.8px;font:400 22.65px/0 'Liberation Serif',serif;color:#0a0a0a;">Основной рыночной концепцией эффективной работы объединения</span><div class="b" style="left:29.6px;top:106.4px;width:17px;height:17px;border-style:solid;border-color:#0c0c0c;border-width:1.4px 3px 3.2px 1.4px;border-radius:2px 2.5px 2.5px 3px;background:#fff"></div><span class="t" style="left:56.8px;top:137.9px;font:400 22.65px/0 'Liberation Serif',serif;color:#0a0a0a;">по взаимному обмену техникой является объективная ситуация с</span><span class="t" style="left:56.8px;top:159.9px;font:400 22.65px/0 'Liberation Serif',serif;color:#0a0a0a;">недостаточностью техники в малых хозяйствах и низкая нагрузка на</span><span class="t" style="left:56.8px;top:181.9px;font:400 22.65px/0 'Liberation Serif',serif;color:#0a0a0a;">имеющиеся высокопроизводительные машины;</span><span class="t" style="left:56.8px;top:207.9px;font:400 22.65px/0 'Liberation Serif',serif;color:#0a0a0a;">Техника предоставляется только вместе с механизатором, которым</span><div class="b" style="left:29.6px;top:198.5px;width:17px;height:17px;border-style:solid;border-color:#0c0c0c;border-width:1.4px 3px 3.2px 1.4px;border-radius:2px 2.5px 2.5px 3px;background:#fff"></div><span class="t" style="left:56.8px;top:230.0px;font:400 22.65px/0 'Liberation Serif',serif;color:#0a0a0a;">может быть и сам фермер.</span><span class="t" style="left:56.8px;top:257.0px;font:400 22.65px/0 'Liberation Serif',serif;color:#0a0a0a;">В основе проекта – многолетний опыт работы комплексных</span><div class="b" style="left:29.6px;top:247.6px;width:17px;height:17px;border-style:solid;border-color:#0c0c0c;border-width:1.4px 3px 3.2px 1.4px;border-radius:2px 2.5px 2.5px 3px;background:#fff"></div><span class="t" style="left:56.8px;top:279.0px;font:400 22.65px/0 'Liberation Serif',serif;color:#0a0a0a;">механизированных отрядов при районных объединениях</span><span class="t" style="left:56.8px;top:300.9px;font:400 22.65px/0 'Liberation Serif',serif;color:#0a0a0a;">«Сельхозтехника», неформальной межхозяйственной взаимопомощи</span><span class="t" style="left:56.8px;top:322.8px;font:400 22.65px/0 'Liberation Serif',serif;color:#0a0a0a;">и практика организации современных МТС.</span><span class="t" style="left:56.8px;top:349.8px;font:400 22.65px/0 'Liberation Serif',serif;color:#0a0a0a;">В проекте проработаны типовые договора и условия реализации в</span><div class="b" style="left:29.6px;top:340.4px;width:17px;height:17px;border-style:solid;border-color:#0c0c0c;border-width:1.4px 3px 3.2px 1.4px;border-radius:2px 2.5px 2.5px 3px;background:#fff"></div><span class="t" style="left:56.8px;top:371.4px;font:400 22.65px/0 'Liberation Serif',serif;color:#0a0a0a;">разных форматах, включая кооператив.</span><div class="b" style="left:14.6px;top:447.1px;width:212.7px;height:104.7px;overflow:hidden"><svg style="left:0;top:0;filter:blur(0.45px)" width="212.7" height="104.7" viewBox="22 28 1450 714" preserveAspectRatio="none"><defs><linearGradient id="f1m" x1="0" y1="0" x2="0" y2="1"><stop offset="0" stop-color="#3aa626"/><stop offset=".35" stop-color="#49b82e"/><stop offset="1" stop-color="#3fae2a"/></linearGradient></defs><rect x="22" y="28" width="1450" height="714" fill="#5f9c7c"/><rect x="22" y="28" width="1450" height="16" fill="#3b6d6c"/><rect x="22" y="44" width="1450" height="84" fill="#9dd69c"/><path d="M700 62 L1472 52 V84 L900 88 L700 80Z" fill="#72b487"/><path d="M22 122 L520 126 L900 118 L1472 128 V168 L22 166Z" fill="#4c8c6e"/><path d="M22 126 L500 130 V150 L22 150Z" fill="#3f7c68"/><rect x="22" y="166" width="1450" height="26" fill="#a3d8a2"/><path d="M22 190 L1472 186 V262 L22 256Z" fill="#5c9c7a"/><path d="M22 200 L520 198 V246 L22 250Z" fill="#4f8f72"/><path d="M960 196 L1472 190 V250 L960 256Z" fill="#4c956a"/><path d="M22 256 L420 258 L400 400 L22 470Z" fill="#5f8d7c"/><path d="M22 262 L110 262 L90 470 L22 470Z" fill="#6c9a86"/><path d="M420 260 L1472 256 V390 L400 400Z" fill="#4f8d66"/><path d="M22 470 L150 468 L300 404 L700 392 L1472 380 V742 H22Z" fill="url(#f1m)"/><path d="M22 474 L150 470 L170 500 L140 742 H22Z" fill="#b4da7a"/><path d="M22 474 L120 472 L100 742 H22Z" fill="#c4e08c" opacity=".7"/><path d="M300 430 L1472 404 V470 L260 520Z" fill="#58c63a" opacity=".5"/><path d="M200 600 L1472 560 V640 L180 690Z" fill="#36a024" opacity=".45"/><path d="M360 68 L195 252" stroke="#2f8f3e" stroke-width="17" stroke-linecap="round"/><path d="M575 172 Q477 50 360 68" fill="none" stroke="#8a2a2c" stroke-width="19" stroke-linecap="round"/><path d="M690 122 L622 172" stroke="#2f8f3e" stroke-width="15" stroke-linecap="round"/><path d="M880 184 Q795 104 690 122" fill="none" stroke="#8a2a2c" stroke-width="17" stroke-linecap="round"/><path d="M995 146 L930 184" stroke="#2f8f3e" stroke-width="13" stroke-linecap="round"/><path d="M1172 192 Q1093 128 995 146" fill="none" stroke="#8a2a2c" stroke-width="15" stroke-linecap="round"/><path d="M1245 158 L1212 192" stroke="#2f8f3e" stroke-width="12" stroke-linecap="round"/><path d="M1402 204 Q1333 140 1245 158" fill="none" stroke="#8a2a2c" stroke-width="14" stroke-linecap="round"/><path d="M1472 158 L1285 292" stroke="#2f8f3e" stroke-width="10"/><rect x="98" y="262" width="220" height="180" rx="12" fill="#df4a28"/><rect x="108" y="262" width="200" height="30" fill="#e8663c"/><rect x="122" y="296" width="176" height="46" fill="#6b4658"/><rect x="130" y="300" width="70" height="38" fill="#8c6a86"/><rect x="98" y="395" width="220" height="44" fill="#c63c20"/><rect x="118" y="436" width="60" height="52" rx="8" fill="#2b2424"/><rect x="250" y="430" width="52" height="30" rx="6" fill="#2b2424"/><rect x="178" y="250" width="80" height="16" fill="#3b6d3c"/><rect x="402" y="273" width="128" height="122" rx="6" fill="#e45c38"/><rect x="472" y="292" width="57" height="85" fill="#7e3038"/><rect x="530" y="180" width="130" height="170" rx="8" fill="#dfe6ee"/><rect x="544" y="200" width="106" height="105" rx="4" fill="#26353f"/><path d="M570 240 l18 -22 l22 26 l-14 36 z" fill="#c9d6de" opacity=".55"/><rect x="510" y="350" width="190" height="38" fill="#32262c"/><rect x="716" y="279" width="124" height="116" rx="6" fill="#e45c38"/><rect x="784" y="296" width="55" height="81" fill="#7e3038"/><rect x="840" y="190" width="125" height="162" rx="8" fill="#dfe6ee"/><rect x="854" y="210" width="101" height="100" rx="4" fill="#26353f"/><path d="M880 250 l18 -22 l22 26 l-14 36 z" fill="#c9d6de" opacity=".55"/><rect x="820" y="352" width="185" height="38" fill="#32262c"/><rect x="1016" y="285" width="124" height="112" rx="6" fill="#e45c38"/><rect x="1084" y="302" width="55" height="78" fill="#7e3038"/><rect x="1140" y="200" width="116" height="156" rx="8" fill="#dfe6ee"/><rect x="1154" y="220" width="92" height="96" rx="4" fill="#26353f"/><path d="M1180 260 l18 -22 l22 26 l-14 36 z" fill="#c9d6de" opacity=".55"/><rect x="1120" y="356" width="176" height="38" fill="#32262c"/><rect x="1262" y="295" width="133" height="105" rx="6" fill="#b83c38"/><rect x="1335" y="311" width="59" height="73" fill="#7e3038"/><rect x="1395" y="215" width="90" height="146" rx="8" fill="#dfe6ee"/><rect x="1409" y="235" width="66" height="90" rx="4" fill="#26353f"/><path d="M1435 275 l18 -22 l22 26 l-14 36 z" fill="#c9d6de" opacity=".55"/><rect x="1375" y="361" width="150" height="38" fill="#32262c"/><rect x="22" y="28" width="1450" height="714" fill="none"/></svg></div><div class="b" style="left:233.1px;top:447.1px;width:127.9px;height:104.7px;overflow:hidden"><svg style="left:0;top:0;filter:blur(0.45px)" width="127.9" height="104.7" viewBox="30 30 938 768" preserveAspectRatio="none"><rect x="30" y="30" width="938" height="768" fill="#efecf2"/><path d="M240 30 H968 V196 L900 182 L800 150 L660 112 L420 72 L240 56Z" fill="#5b5961"/><path d="M640 30 H968 V120 L820 90Z" fill="#3f3e46"/><path d="M760 60 L968 90 V190 L880 170 L770 120Z" fill="#8d8d96" opacity=".6"/><rect x="45" y="52" width="140" height="44" fill="#f4f2f6"/><rect x="78" y="94" width="86" height="26" fill="#5c5254"/><rect x="100" y="98" width="26" height="20" fill="#d9d2d2"/><rect x="210" y="110" width="150" height="40" fill="#8f898d"/><rect x="250" y="60" width="180" height="52" fill="#ece9ef"/><rect x="420" y="70" width="230" height="70" fill="#7b6153"/><rect x="340" y="120" width="90" height="46" fill="#4b4547"/><path d="M30 300 L400 368" stroke="#b9b3bb" stroke-width="6"/><path d="M320 360 q10 -100 50 -90 q50 -10 56 90z" fill="#b3abb3"/><path d="M780 300 L968 286 V452 L780 418Z" fill="#a9a1a9"/><path d="M800 320 l20 -30 l20 34 l24 -40 l22 44 l30 -36 l20 40 v100 l-140 -26z" fill="#bdb5bd"/><path d="M776 430 L968 468 V798 H640 L760 640Z" fill="#dcd8e4"/><path d="M30 465 L280 470 L300 560 L30 560Z" fill="#cbcad9"/><rect x="365" y="322" width="112" height="180" rx="38" fill="#272b2f"/><ellipse cx="410" cy="450" rx="36" ry="40" fill="#6d7479"/><rect x="700" y="322" width="72" height="240" rx="26" fill="#25292c"/><path d="M470 160 Q480 148 500 148 H690 Q712 150 716 170 V500 H460Z" fill="#1f2c24"/><rect x="516" y="190" width="166" height="116" rx="8" fill="#cfcfd4"/><path d="M545 300 q0 -70 60 -72 q58 0 62 72z" fill="#b0623f"/><circle cx="600" cy="214" r="17" fill="#2a2526"/><rect x="520" y="312" width="124" height="132" rx="8" fill="#476a49"/><rect x="524" y="398" width="100" height="32" fill="#b9c2bb"/><rect x="540" y="350" width="70" height="34" fill="#25352a"/><rect x="404" y="174" width="32" height="48" rx="8" fill="#222"/><rect x="740" y="180" width="36" height="52" rx="8" fill="#222"/><rect x="714" y="390" width="58" height="52" fill="#c12a3a"/><rect x="720" y="442" width="52" height="28" fill="#dfe9df"/><rect x="716" y="330" width="50" height="60" fill="#3f6a45"/><path d="M322 436 L350 430 L392 488 L360 496Z" fill="#dd9a2c"/><path d="M265 486 L330 490 L470 516 L742 532 L770 600 L772 700 L744 690 L742 600 L480 572 L272 512Z" fill="#e7a234"/><path d="M480 572 L742 600 L742 560 L480 540Z" fill="#d98e22"/><path d="M30 600 Q180 548 330 570 Q520 600 742 612 L760 700 L640 798 H30Z" fill="#faf9fc"/><path d="M30 680 Q220 620 470 690 Q560 720 600 798 H30Z" fill="#ebe8f0" opacity=".8"/><path d="M480 572 q60 30 130 20 q60 24 130 20 l4 40 q-150 -10 -264 -50z" fill="#f6e6d6" opacity=".8"/><rect x="262" y="362" width="32" height="58" rx="8" fill="#b13246"/><rect x="268" y="340" width="14" height="24" fill="#f2f2f2"/></svg></div><div class="b" style="left:369.4px;top:434.9px;width:176.0px;height:115.5px;overflow:hidden"><svg style="left:0;top:0;filter:blur(0.45px)" width="176.0" height="115.5" viewBox="35 45 1143 750" preserveAspectRatio="none"><defs><linearGradient id="s3m" x1="0" y1="0" x2="0" y2="1"><stop offset="0" stop-color="#c7cbd8"/><stop offset="1" stop-color="#e3dfdb"/></linearGradient><linearGradient id="w3m" x1="0" y1="0" x2="0" y2="1"><stop offset="0" stop-color="#d6ad4c"/><stop offset="1" stop-color="#e3c777"/></linearGradient></defs><rect x="35" y="45" width="1143" height="750" fill="url(#s3m)"/><path d="M35 462 L300 456 L1178 448 V795 H35Z" fill="url(#w3m)"/><path d="M35 458 L180 452 L320 462 L320 500 L35 504Z" fill="#dcd3b6"/><path d="M1060 452 L1178 446 V498 L1060 500Z" fill="#8d9c42"/><rect x="35" y="504" width="130" height="14" fill="#b9b04e"/><path d="M35 540 L500 548 L520 600 L300 650 L35 682Z" fill="#c58f2b"/><path d="M35 560 L480 566 L490 590 L35 620Z" fill="#d29e34" opacity=".8"/><path d="M35 690 L1178 600 V795 H35Z" fill="#e2c673" opacity=".7"/><path d="M540 600 L920 596 L900 640 L560 644Z" fill="#8f6c22" opacity=".75"/><path d="M350 322 L418 292 L560 300 L692 372 L692 474 L540 502 L350 462Z" fill="#b02a3a"/><path d="M400 288 L530 284 L560 304 L520 322 L372 322Z" fill="#eae4e6"/><rect x="360" y="334" width="140" height="122" fill="#373d35"/><path d="M380 350 l40 -8 l30 90 l-50 10z" fill="#59645c" opacity=".8"/><path d="M566 410 L692 392 V440 L566 452Z" fill="#efe9e9"/><path d="M600 440 L692 430 V482 L600 490Z" fill="#e6e0e0"/><rect x="316" y="362" width="14" height="84" fill="#403a3a"/><rect x="316" y="440" width="40" height="10" fill="#403a3a"/><path d="M155 486 Q160 470 200 470 L560 468 L560 548 L170 548 Q150 530 155 486Z" fill="#2a2a24"/><rect x="200" y="480" width="340" height="16" fill="#4c4e40"/><ellipse cx="182" cy="516" rx="22" ry="28" fill="#1d1d19"/><path d="M570 318 L862 196 L886 214 L590 346Z" fill="#a72831"/><path d="M858 194 L888 196 L896 232 L866 226Z" fill="#2b2526"/><path d="M884 226 L900 226 L924 330 L906 334Z" fill="#c7a032"/><path d="M532 470 Q560 448 600 462 L628 560 L580 592 L540 560Z" fill="#d3414f"/><ellipse cx="566" cy="476" rx="34" ry="22" fill="#c03444"/><path d="M920 372 L1050 380 L1060 500 L930 512Z" fill="#b72c35"/><path d="M920 372 L1050 380 L1046 396 L922 390Z" fill="#8d2029"/><rect x="1000" y="508" width="42" height="62" rx="16" fill="#231f1e"/><rect x="708" y="314" width="30" height="208" rx="8" fill="#231f21"/><path d="M752 318 Q760 304 780 304 H872 Q890 306 892 322 V452 H752Z" fill="#262123"/><rect x="766" y="326" width="112" height="84" fill="#aeb8c2"/><path d="M800 330 l30 0 l20 76 l-40 0z" fill="#3b3536" opacity=".85"/><path d="M738 420 Q760 402 860 408 L866 512 L738 516Z" fill="#c8323a"/><rect x="726" y="508" width="86" height="84" fill="#2a2325"/><rect x="742" y="470" width="60" height="22" fill="#8f2029"/><rect x="940" y="450" width="62" height="156" rx="28" fill="#211d1d"/><rect x="644" y="478" width="84" height="158" rx="34" fill="#1d1a1a"/><rect x="868" y="474" width="80" height="158" rx="34" fill="#1d1a1a"/><rect x="660" y="500" width="30" height="110" rx="14" fill="#34302f"/><rect x="884" y="496" width="30" height="112" rx="14" fill="#34302f"/></svg></div><div class="b" style="left:550.2px;top:421.9px;width:181.9px;height:111.4px;overflow:hidden"><svg style="left:0;top:0;filter:blur(0.45px)" width="181.9" height="111.4" viewBox="42 40 1238 758" preserveAspectRatio="none"><defs><linearGradient id="s4m" x1="0" y1="0" x2="0" y2="1"><stop offset="0" stop-color="#d7d7dd"/><stop offset=".55" stop-color="#e6e6ea"/><stop offset="1" stop-color="#dcdce2"/></linearGradient></defs><rect x="42" y="40" width="1238" height="758" fill="url(#s4m)"/><ellipse cx="760" cy="120" rx="420" ry="70" fill="#eeeef2" opacity=".8"/><ellipse cx="240" cy="620" rx="260" ry="120" fill="#ececf1" opacity=".85"/><ellipse cx="1120" cy="260" rx="160" ry="110" fill="#cfcfd6" opacity=".6"/><g stroke="#8f8787" stroke-width="5" fill="none" opacity=".75"><path d="M1230 740 V420 M1230 520 L1270 330 M1230 560 L1180 420 M1200 480 L1170 430 M1250 430 L1280 380 M1190 740 V560 M1190 620 L1165 520 M1265 740 V600"/></g><path d="M1150 700 q60 -80 130 -30 v80 h-130z" fill="#a9a3a3" opacity=".5"/><rect x="42" y="742" width="1238" height="56" fill="#5c8b3b"/><path d="M600 742 L1280 730 V760 L600 760Z" fill="#a3b184"/><rect x="42" y="742" width="400" height="10" fill="#47743a"/><path d="M196 560 L352 160 L376 168 L236 572Z" fill="#26252a"/><path d="M236 560 L382 180 L402 190 L272 568Z" fill="#2c2b30"/><path d="M250 470 L340 430 M228 420 L320 330 M290 300 L340 250" stroke="#2a292e" stroke-width="12"/><ellipse cx="272" cy="216" rx="30" ry="26" fill="#1c1b1f"/><ellipse cx="270" cy="270" rx="22" ry="20" fill="#1c1b1f"/><ellipse cx="178" cy="440" rx="24" ry="20" fill="#1c1b1f"/><rect x="186" y="530" width="220" height="34" fill="#28272c"/><rect x="150" y="590" width="260" height="18" fill="#2c2b30"/><rect x="146" y="590" width="34" height="24" fill="#d9c9a0"/><path d="M200 610 V720 M280 610 V700" stroke="#3a393e" stroke-width="8"/><ellipse cx="272" cy="716" rx="22" ry="50" fill="#2a292e"/><ellipse cx="270" cy="716" rx="9" ry="30" fill="#cfcfd2"/><path d="M408 400 Q420 388 520 400 L560 430 L500 470 L410 440Z" fill="#e8e8ea"/><path d="M410 392 L560 420 L556 432 L410 404Z" fill="#b9483c"/><ellipse cx="1090" cy="672" rx="92" ry="76" fill="#1f1d1f"/><ellipse cx="1074" cy="682" rx="50" ry="36" fill="#aaa9a2"/><ellipse cx="1070" cy="676" rx="40" ry="24" fill="#2a2829"/><path d="M1004 500 Q1010 482 1040 482 L1150 490 Q1186 500 1186 540 V600 Q1180 640 1140 640 L1010 640Z" fill="#1c1b1e"/><rect x="1040" y="468" width="72" height="26" rx="8" fill="#242327"/><rect x="700" y="186" width="22" height="340" rx="6" fill="#19181b"/><path d="M545 300 L600 252 L822 270 L832 300 L752 312 L752 540 L660 560 L540 430Z" fill="#272326"/><path d="M562 312 L604 292 L690 300 L690 436 L600 440 L556 410Z" fill="#a9bac9"/><path d="M610 330 l40 -10 l10 100 l-50 6z" fill="#e9eef2" opacity=".8"/><path d="M726 292 L818 298 L822 380 L726 392Z" fill="#c9d1d9"/><rect x="598" y="220" width="56" height="40" fill="#2c292b"/><rect x="660" y="234" width="40" height="16" fill="#d9c36a"/><path d="M820 296 L930 300 L930 330 L906 330 L906 310 L822 308Z" fill="#232124"/><path d="M750 388 L800 366 L922 370 L922 474 L750 504Z" fill="#a93028"/><path d="M760 392 L802 374 L900 378 L900 400 L760 420Z" fill="#c44a3a" opacity=".8"/><path d="M920 372 L1020 380 L1034 420 L1030 522 L920 520Z" fill="#1d1b1e"/><rect x="940" y="378" width="78" height="16" fill="#d9d9dc"/><rect x="936" y="420" width="80" height="84" fill="#2d2b2e"/><path d="M500 470 L560 426 L622 426 L672 560 L640 572 L588 470Z" fill="#b5322a"/><rect x="640" y="560" width="140" height="136" fill="#221f22"/><ellipse cx="582" cy="620" rx="62" ry="142" fill="#222022"/><ellipse cx="476" cy="620" rx="88" ry="146" fill="#1b191b"/><ellipse cx="440" cy="630" rx="42" ry="106" fill="#e9e1c9"/><ellipse cx="436" cy="632" rx="12" ry="30" fill="#cfc6ae"/><ellipse cx="740" cy="720" rx="58" ry="40" fill="#1f1d1f"/><ellipse cx="870" cy="620" rx="106" ry="146" fill="#1b191b"/><ellipse cx="850" cy="626" rx="62" ry="96" fill="#ebe4cf"/><ellipse cx="850" cy="628" rx="36" ry="52" fill="#262325"/></svg></div><span class="t" style="left:723.3px;top:539.2px;font:400 12.2px/0 'Liberation Sans',sans-serif;color:#111;transform:scaleX(0.9733);">5</span><div class="b" style="left:256.0px;top:552.6px;width:240px;height:0;border-top:1px dotted #8a8a8a"></div><div class="b" style="left:361.4px;top:520.6px;width:8px;height:0;border-top:1px dotted #8a8a8a"></div><span class="t" style="left:364.5px;top:535.4px;font:400 9px/0 'Liberation Sans',sans-serif;color:#222;transform:scaleX(0.9028);">н</span></div>
<div class="b" style="left:251.5px;top:196.5px;width:16.0px;height:595.5px;background:#dad9da;"></div>
<div class="b" style="left:251.5px;top:196.5px;width:16.0px;height:16.0px;background:#fff;border:1px solid #adadad"></div>
<svg style="left:255.0px;top:202.0px" width="9" height="5" viewBox="0 0 9 5"><path d="M0 4.6 L4.5 0.4 L9 4.6Z" fill="#5e5e5e"/></svg>
<div class="b" style="left:251.5px;top:283.0px;width:16.0px;height:127.0px;background:#fff;border:1px solid #b4b4b4"></div>
<div class="b" style="left:251.5px;top:779.0px;width:16.0px;height:13.0px;background:#fff;border:1px solid #adadad"></div>
<svg style="left:255.0px;top:784.0px" width="9" height="5" viewBox="0 0 9 5"><path d="M0 0.4 L4.5 4.6 L9 0.4Z" fill="#5e5e5e"/></svg>
<div class="b" style="left:272.0px;top:196.0px;width:1.0px;height:595.0px;background:#d2d2d2;"></div>
<div class="b" style="left:1482.5px;top:197.0px;width:16.5px;height:535.0px;background:#dad9da;"></div>
<div class="b" style="left:1482.5px;top:197.0px;width:16.5px;height:15.5px;background:#fff;border:1px solid #adadad"></div>
<svg style="left:1486.2px;top:202.5px" width="9" height="5" viewBox="0 0 9 5"><path d="M0 4.6 L4.5 0.4 L9 4.6Z" fill="#5e5e5e"/></svg>
<div class="b" style="left:1482.5px;top:339.5px;width:16.5px;height:31.0px;background:#fff;border:1px solid #b4b4b4"></div>
<div class="b" style="left:1482.5px;top:716.0px;width:16.5px;height:16.0px;background:#fff;border:1px solid #adadad"></div>
<svg style="left:1486.2px;top:722.0px" width="9" height="5" viewBox="0 0 9 5"><path d="M0 0.4 L4.5 4.6 L9 0.4Z" fill="#5e5e5e"/></svg>
<svg style="left:1486px;top:738px" width="10" height="10" viewBox="0 0 10 10"><path d="M0.6 4.6 L5 0.6 L9.4 4.6Z M0.6 9.4 L5 5.4 L9.4 9.4Z" fill="#666"/></svg>
<svg style="left:1486px;top:756px" width="10" height="10" viewBox="0 0 10 10"><path d="M0.6 0.6 L5 4.6 L9.4 0.6Z M0.6 5.4 L5 9.4 L9.4 5.4Z" fill="#666"/></svg>
<span class="t" style="left:13.0px;top:220.5px;font:400 17.5px/0 'Liberation Sans',sans-serif;color:#595959;transform:scaleX(0.8732);">3</span>
<span class="t" style="left:13.0px;top:385.4px;font:400 17.5px/0 'Liberation Sans',sans-serif;color:#595959;transform:scaleX(0.9040);">4</span>
<span class="t" style="left:13.0px;top:549.5px;font:400 17.5px/0 'Liberation Sans',sans-serif;color:#d24726;transform:scaleX(0.8732);">5</span>
<span class="t" style="left:13.0px;top:714.5px;font:400 17.5px/0 'Liberation Sans',sans-serif;color:#595959;transform:scaleX(0.9040);">6</span>
<div class="b" style="left:37.3px;top:214.2px;width:192.4px;height:144.6px;overflow:hidden;background:#fdfdfd;border:1px solid #cfcfcf;box-shadow:inset 0 0 0 1px #fbfbf6;filter:blur(.3px)"><div style="position:absolute;left:0;top:0;width:769.6px;height:578.4px;transform:scale(.25);transform-origin:0 0;background:linear-gradient(180deg,#dde7c5 0,#e6ebd0 45%,#efe7cf 100%)"><span class="t" style="left:68.4px;top:39.5px;font:700 25.6px/0 'Liberation Sans',sans-serif;color:#2f4f90;transform:scaleX(0.9957);">О кооперации в современной России в «научном</span><span class="t" style="left:140.8px;top:74.7px;font:700 25.6px/0 'Liberation Sans',sans-serif;color:#2f4f90;transform:scaleX(1.0272);">завещании» А.А. Никонова /1995 год/</span><div class="b" style="left:178.8px;top:98.0px;width:570.4px;height:441.2px;background:#ffffff;"></div><svg style="left:23.2px;top:102.0px" width="155.6" height="217.2" viewBox="0 0 265 370" preserveAspectRatio="none"><defs><linearGradient id="pg3" x1="0" y1="0" x2="1" y2="0"><stop offset="0" stop-color="#ddd2c6"/><stop offset=".3" stop-color="#c4b5a6"/><stop offset=".55" stop-color="#8d7d72"/><stop offset="1" stop-color="#7a6a62"/></linearGradient></defs><rect width="265" height="370" fill="url(#pg3)"/><rect x="0" width="70" height="370" fill="#e2d8cc" opacity=".7"/><path d="M10 370 L28 210 Q60 150 120 132 L180 128 Q240 150 262 220 L265 370Z" fill="#3b3132"/><path d="M40 370 L60 230 Q80 180 120 150 L120 370Z" fill="#4a3f40" opacity=".7"/><path d="M120 132 L142 250 L170 132Z" fill="#ece4da"/><path d="M138 150 L150 148 L156 270 L142 280Z" fill="#2a2224"/><ellipse cx="140" cy="84" rx="50" ry="62" fill="#bca894"/><path d="M92 70 Q96 14 142 14 Q192 14 192 74 Q176 40 140 42 Q108 40 92 70Z" fill="#e6dfd6"/><path d="M104 96 q36 18 72 0 q-6 44 -36 50 q-30 -6 -36 -50z" fill="#a8927e" opacity=".8"/><path d="M112 80 h20 M150 80 h20" stroke="#4a3c36" stroke-width="5"/><path d="M20 300 Q70 262 130 280 Q176 292 170 330 Q110 360 40 350Z" fill="#cdbcaa"/><path d="M150 320 h30 v30 h-30z" fill="#ece6de"/></svg><svg style="left:26.8px;top:319.2px" width="155.6" height="244.8" viewBox="0 0 39 61" preserveAspectRatio="none"><defs><linearGradient id="bk3" x1="0" y1="0" x2="1" y2="1"><stop offset="0" stop-color="#6a1f33"/><stop offset=".5" stop-color="#7a2a3c"/><stop offset="1" stop-color="#561426"/></linearGradient></defs><rect width="39" height="61" fill="url(#bk3)"/><rect width="2.4" height="61" fill="#4a1020"/><rect x="11" y="5.6" width="18" height="1.5" fill="#d9c6b0"/><rect x="7" y="13.4" width="26" height="2.6" fill="#cdb497"/><rect x="5" y="17.6" width="30" height="4.4" fill="#e0cfb6"/><rect x="8" y="23.6" width="24" height="2.6" fill="#cbb092"/><rect x="8" y="28.4" width="23" height="1.5" fill="#b59a80"/><rect x="10" y="31.4" width="19" height="1.5" fill="#b59a80"/><rect x="7" y="34.6" width="25" height="2" fill="#c2a88c"/><rect x="8" y="38.2" width="23" height="2" fill="#c2a88c"/><rect x="12" y="41.8" width="15" height="1.5" fill="#b59a80"/></svg><span class="t" style="left:186.8px;top:123.8px;font:400 17.2px/0 'Liberation Serif',serif;font-style:italic;color:#2b3466;transform:scaleX(1.3113);">1. О взгляде социализма: «…сама идея кооперации в новой</span><span class="t" style="left:186.8px;top:144.2px;font:400 17.2px/0 'Liberation Serif',serif;font-style:italic;color:#2b3466;transform:scaleX(1.3970);">стране оказывается дискредитированной, народная и</span><span class="t" style="left:186.8px;top:164.6px;font:400 17.2px/0 'Liberation Serif',serif;font-style:italic;color:#2b3466;transform:scaleX(1.2419);">социально-моральный кредит кооперации у населения России</span><span class="t" style="left:186.8px;top:185.0px;font:400 17.2px/0 'Liberation Serif',serif;font-style:italic;color:#2b3466;">низок…».</span><span class="t" style="left:186.8px;top:206.2px;font:700 17.2px/0 'Liberation Serif',serif;color:#2b3466;">2. О необходимости развития кооперации:</span><span class="t" style="left:186.8px;top:227.0px;font:400 17.2px/0 'Liberation Serif',serif;font-style:italic;color:#2b3466;transform:scaleX(1.4988);">«для фермеров существование которых в условиях</span><span class="t" style="left:186.8px;top:247.4px;font:400 17.2px/0 'Liberation Serif',serif;font-style:italic;color:#2b3466;transform:scaleX(1.2932);">рыночной экономики вне кооперации вообще немыслимо. И</span><span class="t" style="left:186.8px;top:268.2px;font:400 17.2px/0 'Liberation Serif',serif;font-style:italic;color:#2b3466;">колхозы скорее всего хозяйственно погибнут без кооперации».</span><span class="t" style="left:186.8px;top:289.4px;font:400 17.2px/0 'Liberation Serif',serif;font-style:italic;color:#2b3466;transform:scaleX(1.2109);">«у нас 76 организаций… Выживут главные и ключевые: …если</span><span class="t" style="left:186.8px;top:310.6px;font:400 17.2px/0 'Liberation Serif',serif;font-style:italic;color:#2b3466;transform:scaleX(1.2126);">будут функционировать в одиночку, не создавая кооперативов</span><span class="t" style="left:186.8px;top:331.8px;font:400 17.2px/0 'Liberation Serif',serif;font-style:italic;color:#2b3466;">торговых, снабжений индустрии, самоликвидируются» [с. 476].</span><span class="t" style="left:186.8px;top:352.6px;font:700 17.2px/0 'Liberation Serif',serif;color:#2b3466;">3. Об использовании мирового опыта:</span><span class="t" style="left:186.8px;top:374.2px;font:400 17.2px/0 'Liberation Serif',serif;font-style:italic;color:#2b3466;transform:scaleX(1.2098);">«…Для построения собственной модели необходимо исходить,</span><span class="t" style="left:186.8px;top:395.8px;font:400 17.2px/0 'Liberation Serif',serif;font-style:italic;color:#2b3466;transform:scaleX(1.4730);">прежде всего, из современных реалий страны, из ее</span><span class="t" style="left:186.8px;top:417.4px;font:400 17.2px/0 'Liberation Serif',serif;font-style:italic;color:#2b3466;transform:scaleX(1.2663);">исторического прошлого, чем бы оно ни было обременено, и</span><span class="t" style="left:186.8px;top:438.6px;font:400 17.2px/0 'Liberation Serif',serif;font-style:italic;color:#2b3466;transform:scaleX(1.3330);">только из мирового опыта. Для элементов собственного</span><span class="t" style="left:186.8px;top:459.8px;font:400 17.2px/0 'Liberation Serif',serif;font-style:italic;color:#2b3466;transform:scaleX(1.2293);">мирного исхода взять мысли найденное в мировой практике и</span><span class="t" style="left:186.8px;top:481.4px;font:400 17.2px/0 'Liberation Serif',serif;font-style:italic;color:#2b3466;">науке, что прошли испытание временем».</span></div><div class="b" style="left:0;top:0;right:0;bottom:0;border:1.6px solid rgba(255,255,255,.72)"></div></div>
<div class="b" style="left:37.3px;top:379.0px;width:192.4px;height:144.3px;overflow:hidden;background:#fdfdfd;border:1px solid #cfcfcf;box-shadow:inset 0 0 0 1px #fbfbf6;filter:blur(.3px)"><div style="position:absolute;left:0;top:0;width:769.6px;height:577.2px;transform:scale(.25);transform-origin:0 0;background:linear-gradient(180deg,#e3e8c3 0,#e8e6c4 40%,#e6dcb8 72%,#d5c39c 100%)"><span class="t" style="left:115.2px;top:52.5px;font:700 24.0px/0 'Liberation Sans',sans-serif;color:#47577a;transform:scaleX(1.0184);letter-spacing:1.5px;">Теория дифференциальных оптимумов</span><span class="t" style="left:296.8px;top:82.9px;font:700 24.0px/0 'Liberation Sans',sans-serif;color:#47577a;transform:scaleX(1.0079);letter-spacing:1.5px;">А.В. Чаянова</span><svg style="left:40.0px;top:113.2px" width="298.0" height="245.2" viewBox="0 0 873 718" preserveAspectRatio="none"><defs><radialGradient id="ch4" cx=".5" cy=".45" r=".75"><stop offset="0" stop-color="#4886a8"/><stop offset="1" stop-color="#2f6a8e"/></radialGradient></defs><rect width="873" height="718" fill="url(#ch4)"/><path d="M165 718 L268 508 L408 438 L560 378 L738 498 L770 718Z" fill="#17293b"/><path d="M300 560 L408 438 L430 700 L200 718Z" fill="#21384d" opacity=".8"/><path d="M408 430 L420 620 L470 520 L540 400 L500 380Z" fill="#dbe9f1"/><path d="M418 470 l20 150 l30 -90z" fill="#b8cfdc"/><ellipse cx="440" cy="232" rx="86" ry="126" fill="#a9c9da"/><path d="M356 230 q20 100 90 134 q60 -20 80 -110 q-20 60 -84 66 q-60 -10 -86 -90z" fill="#6f9cb6"/><path d="M372 200 h46 M452 196 h46" stroke="#1f3b50" stroke-width="14"/><path d="M400 300 h60" stroke="#2f5068" stroke-width="12"/><path d="M262 150 Q268 40 420 34 Q520 36 590 120 Q640 200 610 300 Q590 330 560 290 Q560 170 470 120 Q390 90 340 170 Q330 250 350 270 Q290 250 262 150Z" fill="#1c3348"/><path d="M450 40 Q540 50 580 128 Q560 120 520 96 Q480 60 450 40Z" fill="#d3e3ee"/></svg><span class="t" style="left:354.0px;top:130.9px;font:400 17.6px/0 'Liberation Serif',serif;color:#7d7f78;transform:scaleX(1.6169);">• Теория дифференциальных</span><span class="t" style="left:354.0px;top:154.9px;font:400 17.6px/0 'Liberation Serif',serif;color:#7d7f78;transform:scaleX(1.3853);">оптимумов А.В. Чаянова говорит,</span><span class="t" style="left:354.0px;top:180.5px;font:400 17.6px/0 'Liberation Serif',serif;color:#7d7f78;transform:scaleX(1.0195);">что</span><span class="t" style="left:418.8px;top:180.6px;font:700 16.8px/0 'Liberation Sans',sans-serif;font-style:italic;color:#14161c;transform:scaleX(1.4007);">«Однажды экономисты</span><span class="t" style="left:354.0px;top:206.2px;font:700 16.8px/0 'Liberation Sans',sans-serif;font-style:italic;color:#14161c;transform:scaleX(1.5136);">технического расчленяют</span><span class="t" style="left:354.0px;top:231.0px;font:700 16.8px/0 'Liberation Sans',sans-serif;font-style:italic;color:#14161c;transform:scaleX(1.5665);">отдельные звенья своего</span><span class="t" style="left:354.0px;top:256.6px;font:700 16.8px/0 'Liberation Sans',sans-serif;font-style:italic;color:#14161c;transform:scaleX(1.6179);">организационного плана,</span><span class="t" style="left:354.0px;top:281.4px;font:700 16.8px/0 'Liberation Sans',sans-serif;font-style:italic;color:#14161c;transform:scaleX(1.1114);">кооперативному хозяйству удалось</span><span class="t" style="left:354.0px;top:306.2px;font:700 16.8px/0 'Liberation Sans',sans-serif;font-style:italic;color:#14161c;transform:scaleX(1.7323);">там те механические и</span><span class="t" style="left:354.0px;top:331.0px;font:700 16.8px/0 'Liberation Sans',sans-serif;font-style:italic;color:#14161c;transform:scaleX(1.4583);">хозяйственные операции, в</span><span class="t" style="left:354.0px;top:355.8px;font:700 16.8px/0 'Liberation Sans',sans-serif;font-style:italic;color:#14161c;transform:scaleX(1.1412);">которых технический</span><span class="t" style="left:26.8px;top:385.4px;font:700 16.8px/0 'Liberation Sans',sans-serif;font-style:italic;color:#14161c;transform:scaleX(1.1341);">оптимум был выше размеров крестьянского хозяйства, выделить от</span><span class="t" style="left:26.8px;top:411.0px;font:700 16.8px/0 'Liberation Sans',sans-serif;font-style:italic;color:#14161c;transform:scaleX(1.4104);">отдельных и вынести к другим, такими же хозяйствами</span><span class="t" style="left:26.8px;top:436.6px;font:700 16.8px/0 'Liberation Sans',sans-serif;font-style:italic;color:#14161c;transform:scaleX(1.1139);">организовать их на степень крупного производства…».</span><span class="t" style="left:26.8px;top:485.3px;font:400 14.8px/0 'Liberation Sans',sans-serif;color:#3c3c3c;transform:scaleX(1.2639);">Чаянов А.В. Основные идеи и формы организации сельскохозяйственной</span><span class="t" style="left:26.8px;top:510.1px;font:400 14.8px/0 'Liberation Sans',sans-serif;color:#3c3c3c;transform:scaleX(1.2834);">кооперации(2-е изд., заново перераб. и доп. - Москва: Книгосоюз, 1927, 384 с.</span><span class="t" style="left:26.8px;top:534.9px;font:400 14.8px/0 'Liberation Sans',sans-serif;color:#3c3c3c;transform:scaleX(1.2316);">стр. 32</span></div><div class="b" style="left:0;top:0;right:0;bottom:0;border:1.6px solid rgba(255,255,255,.72)"></div></div>
<div class="b" style="left:37.3px;top:708.3px;width:192.4px;height:84.0px;overflow:hidden;background:#fdfdfd;border:1px solid #cfcfcf;box-shadow:inset 0 0 0 1px #fbfbf6;filter:blur(.3px)"><div style="position:absolute;left:0;top:0;width:769.6px;height:577.2px;transform:scale(.25);transform-origin:0 0;background:linear-gradient(180deg,#e6ebc8 0,#eef0d2 60%,#f0ecd0 100%)"><span class="t" style="left:140.0px;top:65.1px;font:700 30.4px/0 'Liberation Sans',sans-serif;color:#3d5286;transform:scaleX(0.9592);text-shadow:1px 1px 0 rgba(255,255,255,.7);">НАУЧНАЯ И ИНФОРМАЦИОННАЯ</span><span class="t" style="left:288.8px;top:95.9px;font:700 30.4px/0 'Liberation Sans',sans-serif;color:#3d5286;transform:scaleX(0.9608);text-shadow:1px 1px 0 rgba(255,255,255,.7);">ПОДДЕРЖКА</span><div class="b" style="left:86.8px;top:159.2px;width:171.2px;height:204.0px;background:linear-gradient(180deg,#a9a472 0,#b3af82 50%,#bdb990 100%);"></div><div class="b" style="left:92.8px;top:169.2px;width:26.0px;height:8.0px;background:#a5483e;"></div><div class="b" style="left:98.8px;top:283.2px;width:40.0px;height:40.0px;background:rgba(150,146,110,.8);"></div><div class="b" style="left:562.8px;top:141.2px;width:132.0px;height:222.0px;background:linear-gradient(180deg,#f6d9b8 0,#f3ceaa 100%);"></div><div class="b" style="left:610.8px;top:157.2px;width:60.0px;height:4.0px;background:#8a7a6a;"></div><div class="b" style="left:562.8px;top:183.2px;width:132.0px;height:122.0px;background:#c9c5a2;"></div><div class="b" style="left:580.8px;top:193.2px;width:88.0px;height:8.8px;background:#c8343a;"></div><div class="b" style="left:580.8px;top:207.6px;width:88.0px;height:8.8px;background:#c8343a;"></div><div class="b" style="left:580.8px;top:222.0px;width:88.0px;height:8.8px;background:#c8343a;"></div><div class="b" style="left:580.8px;top:236.4px;width:88.0px;height:8.8px;background:#c8343a;"></div><div class="b" style="left:562.8px;top:251.2px;width:24.0px;height:36.0px;background:#f4f4f8;"></div><div class="b" style="left:570.8px;top:271.2px;width:56.0px;height:18.0px;background:#6a7a4a;"></div><div class="b" style="left:594.8px;top:257.2px;width:92.0px;height:3.2px;background:#77735a;"></div><div class="b" style="left:594.8px;top:265.2px;width:92.0px;height:3.2px;background:#77735a;"></div><div class="b" style="left:594.8px;top:295.2px;width:92.0px;height:3.2px;background:#8a5a4a;"></div><div class="b" style="left:624.8px;top:309.2px;width:8.0px;height:14.0px;background:#3a3030;"></div><svg style="left:332.8px;top:165.2px" width="162.0" height="66.0" viewBox="0 0 40.5 16.5" preserveAspectRatio="none"><path d="M6 1 Q-1 8 6 15" fill="none" stroke="#8fbf3a" stroke-width="1.6"/><path d="M9 2.6 Q3.4 8 9 13.6" fill="none" stroke="#e2c62c" stroke-width="1.4"/><path d="M12 4 Q7.6 8.4 12 12.8" fill="none" stroke="#3f86c8" stroke-width="1.4"/><rect x="32" y="6" width="7" height="5" fill="#3a6ab8"/><rect x="29" y="9" width="6" height="4" fill="#3a6ab8"/><circle cx="31" cy="13.6" r="1.8" fill="#2a4f96"/><circle cx="37.6" cy="13.4" r="2.4" fill="#2a4f96"/><circle cx="35.6" cy="2.4" r="1.1" fill="#e8b820"/><path d="M13 14.8 H29" stroke="#6a9ad8" stroke-width="0.8"/></svg><span class="t" style="left:360.8px;top:201.0px;font:400 25.6px/0 'Liberation Serif',serif;font-style:italic;color:#3f78c8;transform:scaleX(1.0244);">Сельхоз</span><div class="b" style="left:334.8px;top:260.0px;width:160.8px;height:103.2px;background:#fbfcff;border:5px solid #3f5ea6"></div><span class="t" style="left:398.8px;top:283.8px;font:700 14.4px/0 'Liberation Sans',sans-serif;color:#2f55a8;transform:scaleX(0.9284);">Сайт</span><span class="t" style="left:346.8px;top:302.2px;font:700 14.4px/0 'Liberation Sans',sans-serif;color:#2f55a8;transform:scaleX(0.9719);">сельхозкооперация</span><span class="t" style="left:358.8px;top:320.2px;font:700 14.4px/0 'Liberation Sans',sans-serif;color:#2f55a8;transform:scaleX(1.1120);">консолидация</span><svg style="left:363.6px;top:126.0px" width="88.0" height="48.8" viewBox="0 0 22 12.2" preserveAspectRatio="none"><path d="M6 8.4 L5 11.6 L10.4 9.4Z" fill="#f5c9a2" stroke="#4a62a6" stroke-width="0.9"/><ellipse cx="11" cy="5.2" rx="10.4" ry="4.6" fill="#f5c9a2" stroke="#4a62a6" stroke-width="0.9"/><path d="M6 8.4 L5 11.6 L10.4 9.4Z" fill="#f5c9a2"/></svg><span class="t" style="left:390.0px;top:147.3px;font:700 16px/0 'Liberation Sans',sans-serif;color:#b7a43a;transform:scaleX(0.9889);">2009</span><svg style="left:190.8px;top:167.6px" width="88.0" height="48.8" viewBox="0 0 22 12.2" preserveAspectRatio="none"><path d="M5 8.2 L4.2 11.4 L9.6 9.2Z" fill="#f5c9a2" stroke="#4a62a6" stroke-width="0.9"/><ellipse cx="11" cy="5.2" rx="10.4" ry="4.6" fill="#f5c9a2" stroke="#4a62a6" stroke-width="0.9"/><path d="M5 8.2 L4.2 11.4 L9.6 9.2Z" fill="#f5c9a2"/></svg><span class="t" style="left:217.2px;top:188.9px;font:700 16px/0 'Liberation Sans',sans-serif;color:#b7a43a;transform:scaleX(0.9889);">2023</span><svg style="left:509.2px;top:137.2px" width="88.0" height="48.8" viewBox="0 0 22 12.2" preserveAspectRatio="none"><path d="M6 8.4 L5 11.6 L10.4 9.4Z" fill="#f5c9a2" stroke="#4a62a6" stroke-width="0.9"/><ellipse cx="11" cy="5.2" rx="10.4" ry="4.6" fill="#f5c9a2" stroke="#4a62a6" stroke-width="0.9"/><path d="M6 8.4 L5 11.6 L10.4 9.4Z" fill="#f5c9a2"/></svg><span class="t" style="left:535.6px;top:158.5px;font:700 16px/0 'Liberation Sans',sans-serif;color:#b7a43a;transform:scaleX(1.0139);">2011</span></div><div class="b" style="left:0;top:0;right:0;bottom:0;border:1.6px solid rgba(255,255,255,.72)"></div></div>
<div class="b" style="left:35.2px;top:541.0px;width:196.6px;height:149.5px;background:#d8492a;"></div>
<div class="b" style="left:38.2px;top:544px;width:191px;height:143.3px;background:#fff;overflow:hidden;filter:blur(.38px)"><div style="position:absolute;left:0;top:0;width:751.5px;height:563.5px;transform:scale(.2543);transform-origin:0 0"><div style="position:absolute;left:0;top:0;width:751px;height:400px;transform-origin:0 0;transform:translateY(8px) scaleY(.975);opacity:.84"><span class="t" style="left:69.8px;top:38.1px;font:700 29.6px/0 'Liberation Sans',sans-serif;color:#34599a;">СельКооп-МТО (машино-технологическое</span><span class="t" style="left:273.2px;top:78.7px;font:700 29.6px/0 'Liberation Sans',sans-serif;color:#34599a;transform:scaleX(0.9957);">объединение)</span><span class="t" style="left:57.8px;top:116.8px;font:400 22.65px/0 'Liberation Serif',serif;color:#0a0a0a;">Основной рыночной концепцией эффективной работы объединения</span><div class="b" style="left:30.6px;top:107.4px;width:17px;height:17px;border-style:solid;border-color:#0c0c0c;border-width:1.4px 3px 3.2px 1.4px;border-radius:2px 2.5px 2.5px 3px;background:#fff"></div><span class="t" style="left:57.8px;top:138.9px;font:400 22.65px/0 'Liberation Serif',serif;color:#0a0a0a;">по взаимному обмену техникой является объективная ситуация с</span><span class="t" style="left:57.8px;top:160.9px;font:400 22.65px/0 'Liberation Serif',serif;color:#0a0a0a;">недостаточностью техники в малых хозяйствах и низкая нагрузка на</span><span class="t" style="left:57.8px;top:182.9px;font:400 22.65px/0 'Liberation Serif',serif;color:#0a0a0a;">имеющиеся высокопроизводительные машины;</span><span class="t" style="left:57.8px;top:208.9px;font:400 22.65px/0 'Liberation Serif',serif;color:#0a0a0a;">Техника предоставляется только вместе с механизатором, которым</span><div class="b" style="left:30.6px;top:199.5px;width:17px;height:17px;border-style:solid;border-color:#0c0c0c;border-width:1.4px 3px 3.2px 1.4px;border-radius:2px 2.5px 2.5px 3px;background:#fff"></div><span class="t" style="left:57.8px;top:231.0px;font:400 22.65px/0 'Liberation Serif',serif;color:#0a0a0a;">может быть и сам фермер.</span><span class="t" style="left:57.8px;top:258.0px;font:400 22.65px/0 'Liberation Serif',serif;color:#0a0a0a;">В основе проекта – многолетний опыт работы комплексных</span><div class="b" style="left:30.6px;top:248.6px;width:17px;height:17px;border-style:solid;border-color:#0c0c0c;border-width:1.4px 3px 3.2px 1.4px;border-radius:2px 2.5px 2.5px 3px;background:#fff"></div><span class="t" style="left:57.8px;top:280.0px;font:400 22.65px/0 'Liberation Serif',serif;color:#0a0a0a;">механизированных отрядов при районных объединениях</span><span class="t" style="left:57.8px;top:301.9px;font:400 22.65px/0 'Liberation Serif',serif;color:#0a0a0a;">«Сельхозтехника», неформальной межхозяйственной взаимопомощи</span><span class="t" style="left:57.8px;top:323.8px;font:400 22.65px/0 'Liberation Serif',serif;color:#0a0a0a;">и практика организации современных МТС.</span><span class="t" style="left:57.8px;top:350.8px;font:400 22.65px/0 'Liberation Serif',serif;color:#0a0a0a;">В проекте проработаны типовые договора и условия реализации в</span><div class="b" style="left:30.6px;top:341.4px;width:17px;height:17px;border-style:solid;border-color:#0c0c0c;border-width:1.4px 3px 3.2px 1.4px;border-radius:2px 2.5px 2.5px 3px;background:#fff"></div><span class="t" style="left:57.8px;top:372.4px;font:400 22.65px/0 'Liberation Serif',serif;color:#0a0a0a;">разных форматах, включая кооператив.</span></div><div class="b" style="left:15.6px;top:448.1px;width:212.7px;height:104.7px;overflow:hidden"><svg style="left:0;top:0;filter:blur(0.45px)" width="212.7" height="104.7" viewBox="22 28 1450 714" preserveAspectRatio="none"><defs><linearGradient id="f1t" x1="0" y1="0" x2="0" y2="1"><stop offset="0" stop-color="#3aa626"/><stop offset=".35" stop-color="#49b82e"/><stop offset="1" stop-color="#3fae2a"/></linearGradient></defs><rect x="22" y="28" width="1450" height="714" fill="#5f9c7c"/><rect x="22" y="28" width="1450" height="16" fill="#3b6d6c"/><rect x="22" y="44" width="1450" height="84" fill="#9dd69c"/><path d="M700 62 L1472 52 V84 L900 88 L700 80Z" fill="#72b487"/><path d="M22 122 L520 126 L900 118 L1472 128 V168 L22 166Z" fill="#4c8c6e"/><path d="M22 126 L500 130 V150 L22 150Z" fill="#3f7c68"/><rect x="22" y="166" width="1450" height="26" fill="#a3d8a2"/><path d="M22 190 L1472 186 V262 L22 256Z" fill="#5c9c7a"/><path d="M22 200 L520 198 V246 L22 250Z" fill="#4f8f72"/><path d="M960 196 L1472 190 V250 L960 256Z" fill="#4c956a"/><path d="M22 256 L420 258 L400 400 L22 470Z" fill="#5f8d7c"/><path d="M22 262 L110 262 L90 470 L22 470Z" fill="#6c9a86"/><path d="M420 260 L1472 256 V390 L400 400Z" fill="#4f8d66"/><path d="M22 470 L150 468 L300 404 L700 392 L1472 380 V742 H22Z" fill="url(#f1t)"/><path d="M22 474 L150 470 L170 500 L140 742 H22Z" fill="#b4da7a"/><path d="M22 474 L120 472 L100 742 H22Z" fill="#c4e08c" opacity=".7"/><path d="M300 430 L1472 404 V470 L260 520Z" fill="#58c63a" opacity=".5"/><path d="M200 600 L1472 560 V640 L180 690Z" fill="#36a024" opacity=".45"/><path d="M360 68 L195 252" stroke="#2f8f3e" stroke-width="17" stroke-linecap="round"/><path d="M575 172 Q477 50 360 68" fill="none" stroke="#8a2a2c" stroke-width="19" stroke-linecap="round"/><path d="M690 122 L622 172" stroke="#2f8f3e" stroke-width="15" stroke-linecap="round"/><path d="M880 184 Q795 104 690 122" fill="none" stroke="#8a2a2c" stroke-width="17" stroke-linecap="round"/><path d="M995 146 L930 184" stroke="#2f8f3e" stroke-width="13" stroke-linecap="round"/><path d="M1172 192 Q1093 128 995 146" fill="none" stroke="#8a2a2c" stroke-width="15" stroke-linecap="round"/><path d="M1245 158 L1212 192" stroke="#2f8f3e" stroke-width="12" stroke-linecap="round"/><path d="M1402 204 Q1333 140 1245 158" fill="none" stroke="#8a2a2c" stroke-width="14" stroke-linecap="round"/><path d="M1472 158 L1285 292" stroke="#2f8f3e" stroke-width="10"/><rect x="98" y="262" width="220" height="180" rx="12" fill="#df4a28"/><rect x="108" y="262" width="200" height="30" fill="#e8663c"/><rect x="122" y="296" width="176" height="46" fill="#6b4658"/><rect x="130" y="300" width="70" height="38" fill="#8c6a86"/><rect x="98" y="395" width="220" height="44" fill="#c63c20"/><rect x="118" y="436" width="60" height="52" rx="8" fill="#2b2424"/><rect x="250" y="430" width="52" height="30" rx="6" fill="#2b2424"/><rect x="178" y="250" width="80" height="16" fill="#3b6d3c"/><rect x="402" y="273" width="128" height="122" rx="6" fill="#e45c38"/><rect x="472" y="292" width="57" height="85" fill="#7e3038"/><rect x="530" y="180" width="130" height="170" rx="8" fill="#dfe6ee"/><rect x="544" y="200" width="106" height="105" rx="4" fill="#26353f"/><path d="M570 240 l18 -22 l22 26 l-14 36 z" fill="#c9d6de" opacity=".55"/><rect x="510" y="350" width="190" height="38" fill="#32262c"/><rect x="716" y="279" width="124" height="116" rx="6" fill="#e45c38"/><rect x="784" y="296" width="55" height="81" fill="#7e3038"/><rect x="840" y="190" width="125" height="162" rx="8" fill="#dfe6ee"/><rect x="854" y="210" width="101" height="100" rx="4" fill="#26353f"/><path d="M880 250 l18 -22 l22 26 l-14 36 z" fill="#c9d6de" opacity=".55"/><rect x="820" y="352" width="185" height="38" fill="#32262c"/><rect x="1016" y="285" width="124" height="112" rx="6" fill="#e45c38"/><rect x="1084" y="302" width="55" height="78" fill="#7e3038"/><rect x="1140" y="200" width="116" height="156" rx="8" fill="#dfe6ee"/><rect x="1154" y="220" width="92" height="96" rx="4" fill="#26353f"/><path d="M1180 260 l18 -22 l22 26 l-14 36 z" fill="#c9d6de" opacity=".55"/><rect x="1120" y="356" width="176" height="38" fill="#32262c"/><rect x="1262" y="295" width="133" height="105" rx="6" fill="#b83c38"/><rect x="1335" y="311" width="59" height="73" fill="#7e3038"/><rect x="1395" y="215" width="90" height="146" rx="8" fill="#dfe6ee"/><rect x="1409" y="235" width="66" height="90" rx="4" fill="#26353f"/><path d="M1435 275 l18 -22 l22 26 l-14 36 z" fill="#c9d6de" opacity=".55"/><rect x="1375" y="361" width="150" height="38" fill="#32262c"/><rect x="22" y="28" width="1450" height="714" fill="none"/></svg></div><div class="b" style="left:234.1px;top:448.1px;width:127.9px;height:104.7px;overflow:hidden"><svg style="left:0;top:0;filter:blur(0.45px)" width="127.9" height="104.7" viewBox="30 30 938 768" preserveAspectRatio="none"><rect x="30" y="30" width="938" height="768" fill="#efecf2"/><path d="M240 30 H968 V196 L900 182 L800 150 L660 112 L420 72 L240 56Z" fill="#5b5961"/><path d="M640 30 H968 V120 L820 90Z" fill="#3f3e46"/><path d="M760 60 L968 90 V190 L880 170 L770 120Z" fill="#8d8d96" opacity=".6"/><rect x="45" y="52" width="140" height="44" fill="#f4f2f6"/><rect x="78" y="94" width="86" height="26" fill="#5c5254"/><rect x="100" y="98" width="26" height="20" fill="#d9d2d2"/><rect x="210" y="110" width="150" height="40" fill="#8f898d"/><rect x="250" y="60" width="180" height="52" fill="#ece9ef"/><rect x="420" y="70" width="230" height="70" fill="#7b6153"/><rect x="340" y="120" width="90" height="46" fill="#4b4547"/><path d="M30 300 L400 368" stroke="#b9b3bb" stroke-width="6"/><path d="M320 360 q10 -100 50 -90 q50 -10 56 90z" fill="#b3abb3"/><path d="M780 300 L968 286 V452 L780 418Z" fill="#a9a1a9"/><path d="M800 320 l20 -30 l20 34 l24 -40 l22 44 l30 -36 l20 40 v100 l-140 -26z" fill="#bdb5bd"/><path d="M776 430 L968 468 V798 H640 L760 640Z" fill="#dcd8e4"/><path d="M30 465 L280 470 L300 560 L30 560Z" fill="#cbcad9"/><rect x="365" y="322" width="112" height="180" rx="38" fill="#272b2f"/><ellipse cx="410" cy="450" rx="36" ry="40" fill="#6d7479"/><rect x="700" y="322" width="72" height="240" rx="26" fill="#25292c"/><path d="M470 160 Q480 148 500 148 H690 Q712 150 716 170 V500 H460Z" fill="#1f2c24"/><rect x="516" y="190" width="166" height="116" rx="8" fill="#cfcfd4"/><path d="M545 300 q0 -70 60 -72 q58 0 62 72z" fill="#b0623f"/><circle cx="600" cy="214" r="17" fill="#2a2526"/><rect x="520" y="312" width="124" height="132" rx="8" fill="#476a49"/><rect x="524" y="398" width="100" height="32" fill="#b9c2bb"/><rect x="540" y="350" width="70" height="34" fill="#25352a"/><rect x="404" y="174" width="32" height="48" rx="8" fill="#222"/><rect x="740" y="180" width="36" height="52" rx="8" fill="#222"/><rect x="714" y="390" width="58" height="52" fill="#c12a3a"/><rect x="720" y="442" width="52" height="28" fill="#dfe9df"/><rect x="716" y="330" width="50" height="60" fill="#3f6a45"/><path d="M322 436 L350 430 L392 488 L360 496Z" fill="#dd9a2c"/><path d="M265 486 L330 490 L470 516 L742 532 L770 600 L772 700 L744 690 L742 600 L480 572 L272 512Z" fill="#e7a234"/><path d="M480 572 L742 600 L742 560 L480 540Z" fill="#d98e22"/><path d="M30 600 Q180 548 330 570 Q520 600 742 612 L760 700 L640 798 H30Z" fill="#faf9fc"/><path d="M30 680 Q220 620 470 690 Q560 720 600 798 H30Z" fill="#ebe8f0" opacity=".8"/><path d="M480 572 q60 30 130 20 q60 24 130 20 l4 40 q-150 -10 -264 -50z" fill="#f6e6d6" opacity=".8"/><rect x="262" y="362" width="32" height="58" rx="8" fill="#b13246"/><rect x="268" y="340" width="14" height="24" fill="#f2f2f2"/></svg></div><div class="b" style="left:370.4px;top:435.9px;width:176.0px;height:115.5px;overflow:hidden"><svg style="left:0;top:0;filter:blur(0.45px)" width="176.0" height="115.5" viewBox="35 45 1143 750" preserveAspectRatio="none"><defs><linearGradient id="s3t" x1="0" y1="0" x2="0" y2="1"><stop offset="0" stop-color="#c7cbd8"/><stop offset="1" stop-color="#e3dfdb"/></linearGradient><linearGradient id="w3t" x1="0" y1="0" x2="0" y2="1"><stop offset="0" stop-color="#d6ad4c"/><stop offset="1" stop-color="#e3c777"/></linearGradient></defs><rect x="35" y="45" width="1143" height="750" fill="url(#s3t)"/><path d="M35 462 L300 456 L1178 448 V795 H35Z" fill="url(#w3t)"/><path d="M35 458 L180 452 L320 462 L320 500 L35 504Z" fill="#dcd3b6"/><path d="M1060 452 L1178 446 V498 L1060 500Z" fill="#8d9c42"/><rect x="35" y="504" width="130" height="14" fill="#b9b04e"/><path d="M35 540 L500 548 L520 600 L300 650 L35 682Z" fill="#c58f2b"/><path d="M35 560 L480 566 L490 590 L35 620Z" fill="#d29e34" opacity=".8"/><path d="M35 690 L1178 600 V795 H35Z" fill="#e2c673" opacity=".7"/><path d="M540 600 L920 596 L900 640 L560 644Z" fill="#8f6c22" opacity=".75"/><path d="M350 322 L418 292 L560 300 L692 372 L692 474 L540 502 L350 462Z" fill="#b02a3a"/><path d="M400 288 L530 284 L560 304 L520 322 L372 322Z" fill="#eae4e6"/><rect x="360" y="334" width="140" height="122" fill="#373d35"/><path d="M380 350 l40 -8 l30 90 l-50 10z" fill="#59645c" opacity=".8"/><path d="M566 410 L692 392 V440 L566 452Z" fill="#efe9e9"/><path d="M600 440 L692 430 V482 L600 490Z" fill="#e6e0e0"/><rect x="316" y="362" width="14" height="84" fill="#403a3a"/><rect x="316" y="440" width="40" height="10" fill="#403a3a"/><path d="M155 486 Q160 470 200 470 L560 468 L560 548 L170 548 Q150 530 155 486Z" fill="#2a2a24"/><rect x="200" y="480" width="340" height="16" fill="#4c4e40"/><ellipse cx="182" cy="516" rx="22" ry="28" fill="#1d1d19"/><path d="M570 318 L862 196 L886 214 L590 346Z" fill="#a72831"/><path d="M858 194 L888 196 L896 232 L866 226Z" fill="#2b2526"/><path d="M884 226 L900 226 L924 330 L906 334Z" fill="#c7a032"/><path d="M532 470 Q560 448 600 462 L628 560 L580 592 L540 560Z" fill="#d3414f"/><ellipse cx="566" cy="476" rx="34" ry="22" fill="#c03444"/><path d="M920 372 L1050 380 L1060 500 L930 512Z" fill="#b72c35"/><path d="M920 372 L1050 380 L1046 396 L922 390Z" fill="#8d2029"/><rect x="1000" y="508" width="42" height="62" rx="16" fill="#231f1e"/><rect x="708" y="314" width="30" height="208" rx="8" fill="#231f21"/><path d="M752 318 Q760 304 780 304 H872 Q890 306 892 322 V452 H752Z" fill="#262123"/><rect x="766" y="326" width="112" height="84" fill="#aeb8c2"/><path d="M800 330 l30 0 l20 76 l-40 0z" fill="#3b3536" opacity=".85"/><path d="M738 420 Q760 402 860 408 L866 512 L738 516Z" fill="#c8323a"/><rect x="726" y="508" width="86" height="84" fill="#2a2325"/><rect x="742" y="470" width="60" height="22" fill="#8f2029"/><rect x="940" y="450" width="62" height="156" rx="28" fill="#211d1d"/><rect x="644" y="478" width="84" height="158" rx="34" fill="#1d1a1a"/><rect x="868" y="474" width="80" height="158" rx="34" fill="#1d1a1a"/><rect x="660" y="500" width="30" height="110" rx="14" fill="#34302f"/><rect x="884" y="496" width="30" height="112" rx="14" fill="#34302f"/></svg></div><div class="b" style="left:551.2px;top:422.9px;width:181.9px;height:111.4px;overflow:hidden"><svg style="left:0;top:0;filter:blur(0.45px)" width="181.9" height="111.4" viewBox="42 40 1238 758" preserveAspectRatio="none"><defs><linearGradient id="s4t" x1="0" y1="0" x2="0" y2="1"><stop offset="0" stop-color="#d7d7dd"/><stop offset=".55" stop-color="#e6e6ea"/><stop offset="1" stop-color="#dcdce2"/></linearGradient></defs><rect x="42" y="40" width="1238" height="758" fill="url(#s4t)"/><ellipse cx="760" cy="120" rx="420" ry="70" fill="#eeeef2" opacity=".8"/><ellipse cx="240" cy="620" rx="260" ry="120" fill="#ececf1" opacity=".85"/><ellipse cx="1120" cy="260" rx="160" ry="110" fill="#cfcfd6" opacity=".6"/><g stroke="#8f8787" stroke-width="5" fill="none" opacity=".75"><path d="M1230 740 V420 M1230 520 L1270 330 M1230 560 L1180 420 M1200 480 L1170 430 M1250 430 L1280 380 M1190 740 V560 M1190 620 L1165 520 M1265 740 V600"/></g><path d="M1150 700 q60 -80 130 -30 v80 h-130z" fill="#a9a3a3" opacity=".5"/><rect x="42" y="742" width="1238" height="56" fill="#5c8b3b"/><path d="M600 742 L1280 730 V760 L600 760Z" fill="#a3b184"/><rect x="42" y="742" width="400" height="10" fill="#47743a"/><path d="M196 560 L352 160 L376 168 L236 572Z" fill="#26252a"/><path d="M236 560 L382 180 L402 190 L272 568Z" fill="#2c2b30"/><path d="M250 470 L340 430 M228 420 L320 330 M290 300 L340 250" stroke="#2a292e" stroke-width="12"/><ellipse cx="272" cy="216" rx="30" ry="26" fill="#1c1b1f"/><ellipse cx="270" cy="270" rx="22" ry="20" fill="#1c1b1f"/><ellipse cx="178" cy="440" rx="24" ry="20" fill="#1c1b1f"/><rect x="186" y="530" width="220" height="34" fill="#28272c"/><rect x="150" y="590" width="260" height="18" fill="#2c2b30"/><rect x="146" y="590" width="34" height="24" fill="#d9c9a0"/><path d="M200 610 V720 M280 610 V700" stroke="#3a393e" stroke-width="8"/><ellipse cx="272" cy="716" rx="22" ry="50" fill="#2a292e"/><ellipse cx="270" cy="716" rx="9" ry="30" fill="#cfcfd2"/><path d="M408 400 Q420 388 520 400 L560 430 L500 470 L410 440Z" fill="#e8e8ea"/><path d="M410 392 L560 420 L556 432 L410 404Z" fill="#b9483c"/><ellipse cx="1090" cy="672" rx="92" ry="76" fill="#1f1d1f"/><ellipse cx="1074" cy="682" rx="50" ry="36" fill="#aaa9a2"/><ellipse cx="1070" cy="676" rx="40" ry="24" fill="#2a2829"/><path d="M1004 500 Q1010 482 1040 482 L1150 490 Q1186 500 1186 540 V600 Q1180 640 1140 640 L1010 640Z" fill="#1c1b1e"/><rect x="1040" y="468" width="72" height="26" rx="8" fill="#242327"/><rect x="700" y="186" width="22" height="340" rx="6" fill="#19181b"/><path d="M545 300 L600 252 L822 270 L832 300 L752 312 L752 540 L660 560 L540 430Z" fill="#272326"/><path d="M562 312 L604 292 L690 300 L690 436 L600 440 L556 410Z" fill="#a9bac9"/><path d="M610 330 l40 -10 l10 100 l-50 6z" fill="#e9eef2" opacity=".8"/><path d="M726 292 L818 298 L822 380 L726 392Z" fill="#c9d1d9"/><rect x="598" y="220" width="56" height="40" fill="#2c292b"/><rect x="660" y="234" width="40" height="16" fill="#d9c36a"/><path d="M820 296 L930 300 L930 330 L906 330 L906 310 L822 308Z" fill="#232124"/><path d="M750 388 L800 366 L922 370 L922 474 L750 504Z" fill="#a93028"/><path d="M760 392 L802 374 L900 378 L900 400 L760 420Z" fill="#c44a3a" opacity=".8"/><path d="M920 372 L1020 380 L1034 420 L1030 522 L920 520Z" fill="#1d1b1e"/><rect x="940" y="378" width="78" height="16" fill="#d9d9dc"/><rect x="936" y="420" width="80" height="84" fill="#2d2b2e"/><path d="M500 470 L560 426 L622 426 L672 560 L640 572 L588 470Z" fill="#b5322a"/><rect x="640" y="560" width="140" height="136" fill="#221f22"/><ellipse cx="582" cy="620" rx="62" ry="142" fill="#222022"/><ellipse cx="476" cy="620" rx="88" ry="146" fill="#1b191b"/><ellipse cx="440" cy="630" rx="42" ry="106" fill="#e9e1c9"/><ellipse cx="436" cy="632" rx="12" ry="30" fill="#cfc6ae"/><ellipse cx="740" cy="720" rx="58" ry="40" fill="#1f1d1f"/><ellipse cx="870" cy="620" rx="106" ry="146" fill="#1b191b"/><ellipse cx="850" cy="626" rx="62" ry="96" fill="#ebe4cf"/><ellipse cx="850" cy="628" rx="36" ry="52" fill="#262325"/></svg></div><span class="t" style="left:724.3px;top:540.2px;font:400 12.2px/0 'Liberation Sans',sans-serif;color:#111;transform:scaleX(0.9733);">5</span><div class="b" style="left:257.0px;top:553.6px;width:240px;height:0;border-top:1px dotted #8a8a8a"></div><div class="b" style="left:362.4px;top:521.6px;width:8px;height:0;border-top:1px dotted #8a8a8a"></div><span class="t" style="left:365.5px;top:536.4px;font:400 9px/0 'Liberation Sans',sans-serif;color:#222;transform:scaleX(0.9028);">н</span></div></div>
<svg style="left:511.5px;top:617.5px" width="15" height="24" viewBox="0 0 15 24"><path d="M1 1 V18.4 L5 14.8 L8.2 22.4 L11 21.2 L7.8 13.8 H13.2 Z" fill="#fff" stroke="#222" stroke-width="1.1" stroke-linejoin="round"/></svg></div>
<div id="zoom"><div class="b" style="left:0.0px;top:0.0px;width:1500.0px;height:22.0px;background:#1b1b1b;"></div>
<div class="b" style="left:0.0px;top:792.0px;width:1500.0px;height:52.0px;background:#1b1b1b;"></div>
<div class="b" style="left:658.0px;top:0.0px;width:299.0px;height:21.0px;background:#23d25a;border-radius:0 0 0 5px"></div>
<span class="t" style="left:676.0px;top:10.5px;font:700 12px/0 'Liberation Sans',sans-serif;color:#1c1c1c;transform:scaleX(0.9483);">Вы просматриваете экран Сергей Скоморохов</span>
<div class="b" style="left:957.0px;top:0.0px;width:170.0px;height:21.0px;background:#222426;border-radius:0 0 5px 0"></div>
<span class="t" style="left:972.0px;top:10.5px;font:700 12px/0 'Liberation Sans',sans-serif;color:#ffffff;transform:scaleX(0.9334);">Настройки просмотра</span>
<svg style="left:1109px;top:7px" width="10" height="7" viewBox="0 0 10 7"><path d="M1.5 1.5 L5 5 L8.5 1.5" fill="none" stroke="#fff" stroke-width="1.6"/></svg>
<div class="b" style="left:1474.0px;top:6.6px;width:18.0px;height:24.9px;background:rgba(42,42,42,.31);border-radius:0 6px 6px 0"></div>
<span class="t" style="left:1480.3px;top:18.7px;font:400 10px/0 'Liberation Sans',sans-serif;color:#f0f0f0;transform:scaleX(1.0096);">д</span>
<div class="b" style="left:1257.0px;top:0.0px;width:222.0px;height:28.6px;background:#252c37;border-radius:0 0 3px 3px;box-shadow:0 1px 3px rgba(0,0,0,.5)"></div>
<span class="t" style="left:1282.4px;top:13.1px;font:400 13px/0 'Liberation Sans',sans-serif;color:#dcdcdc;transform:scaleX(0.9332);">Говорит: Сергей Скоморохов</span>
<div class="b" style="left:8.0px;top:8.0px;width:23.0px;height:23.0px;background:rgba(36,32,31,.96);border-radius:5px"></div>
<svg style="left:13.0px;top:12.5px" width="13" height="15" viewBox="0 0 13 15"><path d="M6.5 0.3 L12.6 2.4 C12.9 8 10.5 12.3 6.5 14.7 C2.5 12.3 0.1 8 0.4 2.4 Z" fill="#21d65a"/><path d="M3.6 7.4 L5.8 9.6 L9.6 5.3" fill="none" stroke="#1d3524" stroke-width="1.7" stroke-linecap="round" stroke-linejoin="round"/></svg>
<div class="b" style="left:40.7px;top:9.6px;width:20px;height:20px;border-radius:50%;background:radial-gradient(circle,rgba(255,90,40,.95) 0,rgba(240,80,36,.8) 30%,rgba(225,80,36,.42) 50%,rgba(215,80,40,.14) 66%,rgba(210,80,40,0) 76%)"></div>
<div class="b" style="left:45.4px;top:14.3px;width:10.6px;height:10.6px;border-radius:50%;background:radial-gradient(circle at 50% 35%,#ff8a80 0,#f24a44 55%,#e23a36 100%)"></div>
<div class="b" style="left:47.2px;top:18.6px;width:7.0px;height:2.3px;background:#ffe3de;border-radius:1.2px;opacity:.9"></div>
<span class="t" style="left:65.2px;top:19.4px;font:400 11.5px/0 'Liberation Sans',sans-serif;color:#f2f2f2;transform:scaleX(0.8904);">Запись</span>
<span class="t" style="left:10.3px;top:833.1px;font:400 12px/0 'Liberation Sans',sans-serif;color:#d6d6d6;transform:scaleX(1.0258);">Включить звук</span>
<span class="t" style="left:119.5px;top:833.1px;font:400 12px/0 'Liberation Sans',sans-serif;color:#d6d6d6;transform:scaleX(0.9902);">Начать видео</span>
<span class="t" style="left:543.6px;top:833.1px;font:400 12px/0 'Liberation Sans',sans-serif;color:#d6d6d6;transform:scaleX(1.0082);">Участники</span>
<span class="t" style="left:671.4px;top:833.1px;font:400 12px/0 'Liberation Sans',sans-serif;color:#d6d6d6;transform:scaleX(0.9344);">Чат</span>
<span class="t" style="left:733.0px;top:833.1px;font:700 12px/0 'Liberation Sans',sans-serif;color:#23d95c;transform:scaleX(0.9379);">Демонстрация экрана</span>
<span class="t" style="left:882.6px;top:833.1px;font:400 12px/0 'Liberation Sans',sans-serif;color:#d6d6d6;transform:scaleX(0.9752);">Запись</span>
<span class="t" style="left:957.6px;top:833.1px;font:400 12px/0 'Liberation Sans',sans-serif;color:#d6d6d6;transform:scaleX(0.9793);">Реакции</span>
<span class="t" style="left:1027.6px;top:833.1px;font:400 12px/0 'Liberation Sans',sans-serif;color:#d6d6d6;transform:scaleX(1.0168);">Приложения</span>
<svg style="left:83.4px;top:807.2px" width="8" height="5.2" viewBox="0 0 8 5.2"><path d="M0.8 4.6 L4 1 L7.2 4.6" fill="none" stroke="#c8c8c8" stroke-width="1.4"/></svg>
<svg style="left:199.0px;top:807.2px" width="8" height="5.2" viewBox="0 0 8 5.2"><path d="M0.8 4.6 L4 1 L7.2 4.6" fill="none" stroke="#c8c8c8" stroke-width="1.4"/></svg>
<svg style="left:620.5px;top:807.2px" width="8" height="5.2" viewBox="0 0 8 5.2"><path d="M0.8 4.6 L4 1 L7.2 4.6" fill="none" stroke="#c8c8c8" stroke-width="1.4"/></svg>
<svg style="left:708.3px;top:807.2px" width="8" height="5.2" viewBox="0 0 8 5.2"><path d="M0.8 4.6 L4 1 L7.2 4.6" fill="none" stroke="#c8c8c8" stroke-width="1.4"/></svg>
<svg style="left:39.0px;top:797.0px" width="24" height="26" viewBox="0 0 24 26"><rect x="8" y="2.4" width="7" height="13" rx="3.5" fill="#9e9e9e"/><path d="M4.6 11.4 C4.6 16 7.6 18 11.5 18 C15.4 18 18.4 16 18.4 11.4 M11.5 18 V22 M7.6 22.4 H15.4" fill="none" stroke="#9e9e9e" stroke-width="1.5" stroke-linecap="round"/><path d="M1 24.4 L22.6 1" stroke="#f0464a" stroke-width="1.7" stroke-linecap="round"/></svg>
<svg style="left:144.0px;top:797.0px" width="28" height="26" viewBox="0 0 28 26"><rect x="2" y="6.4" width="15.6" height="13.4" rx="2.6" fill="#9e9e9e"/><path d="M18.6 11.2 L25.6 7.4 V18.8 L18.6 15Z" fill="#9e9e9e"/><path d="M3 24.4 L24.6 1" stroke="#f0464a" stroke-width="1.7" stroke-linecap="round"/></svg>
<svg style="left:560.5px;top:801.0px" width="24.5" height="18" viewBox="0 0 24.5 18"><circle cx="7.6" cy="4.6" r="4.2" fill="#b9b9b9"/><path d="M0.4 17 C0.4 12.4 3.4 10.2 7.6 10.2 C11.8 10.2 14.8 12.4 14.8 17Z" fill="#b9b9b9"/><circle cx="17.6" cy="6" r="3.5" fill="#b9b9b9"/><path d="M16 17 C16 14.6 15.4 13 14.2 11.8 C15.2 11.2 16.2 11 17.6 11 C21.2 11 24 13 24 17Z" fill="#b9b9b9"/></svg>
<span class="t" style="left:589.6px;top:808.2px;font:400 11.5px/0 'Liberation Sans',sans-serif;color:#d6d6d6;transform:scaleX(0.9065);">53</span>
<svg style="left:671.0px;top:801.0px" width="20" height="18" viewBox="0 0 20 18"><path d="M3 0.6 H16.6 C18 0.6 19 1.6 19 3 V10.4 C19 11.8 18 12.8 16.6 12.8 H9.6 L4.6 17 V12.8 H3 C1.6 12.8 0.6 11.8 0.6 10.4 V3 C0.6 1.6 1.6 0.6 3 0.6Z" fill="#b9b9b9"/></svg>
<div class="b" style="left:684.0px;top:795.6px;width:21.6px;height:13.4px;background:#f0303c;border-radius:5px"></div>
<span class="t" style="left:688.6px;top:802.7px;font:700 10.5px/0 'Liberation Sans',sans-serif;color:#ffffff;transform:scaleX(1.0610);">13</span>
<div class="b" style="left:781.6px;top:801.0px;width:24.4px;height:17.4px;background:#23d95c;border-radius:3.4px"></div>
<svg style="left:789.3px;top:804.6px" width="9" height="10.4" viewBox="0 0 9 10.4"><path d="M4.5 9.8 V1.4 M1 4.6 L4.5 1 L8 4.6" fill="none" stroke="#14241a" stroke-width="1.7" stroke-linecap="round" stroke-linejoin="round"/></svg>
<svg style="left:892.0px;top:799.2px" width="21" height="21" viewBox="0 0 21 21"><circle cx="10.5" cy="10.5" r="9.6" fill="none" stroke="#b9b9b9" stroke-width="1.3"/><circle cx="10.5" cy="10.5" r="7.2" fill="#b9b9b9"/></svg>
<svg style="left:971.0px;top:797.0px" width="23" height="23" viewBox="0 0 23 23"><circle cx="9.4" cy="13" r="8.6" fill="#b9b9b9"/><circle cx="6.4" cy="11" r="1.2" fill="#1b1b1b"/><circle cx="12.4" cy="11" r="1.2" fill="#1b1b1b"/><path d="M5.4 14.6 C7.4 17.6 11.4 17.6 13.4 14.6" fill="none" stroke="#1b1b1b" stroke-width="1.3" stroke-linecap="round"/><path d="M18 1.2 V7.6 M14.8 4.4 H21.2" stroke="#b9b9b9" stroke-width="1.3"/></svg>
<svg style="left:1055.4px;top:802.6px" width="17" height="16" viewBox="0 0 17 16"><path d="M6.4 1.6 H4 C2.4 1.6 1.4 2.6 1.4 4.2 V6.6 M10.4 14.6 H12.8 C14.4 14.6 15.4 13.6 15.4 12 V9.6" fill="none" stroke="#b9b9b9" stroke-width="1.4" stroke-linecap="round"/><circle cx="12.8" cy="3.6" r="2.2" fill="none" stroke="#b9b9b9" stroke-width="1.3"/><circle cx="4" cy="12.4" r="2.2" fill="none" stroke="#b9b9b9" stroke-width="1.3"/></svg>
<div class="b" style="left:1428.0px;top:805.0px;width:60.3px;height:26.5px;background:#b92329;border-radius:7px"></div>
<span class="t" style="left:1439.8px;top:818.5px;font:700 13px/0 'Liberation Sans',sans-serif;color:#ffffff;transform:scaleX(0.8263);">Выйти</span>
<div class="b" style="left:11.8px;top:742.3px;width:39.2px;height:39.2px;border-radius:50%;background:#2a2d30;box-shadow:0 0 2px rgba(0,0,0,.35)"></div>
<svg style="left:23.0px;top:752.6px" width="17" height="18" viewBox="0 0 17 18"><path d="M2 16 L3 12 L12 2.6 C12.8 1.8 14 1.8 14.8 2.6 C15.6 3.4 15.6 4.6 14.8 5.4 L5.8 14.8 Z M10.6 4.2 L13.4 7" fill="none" stroke="#23d95c" stroke-width="1.5" stroke-linejoin="round"/></svg></div></body></html>
